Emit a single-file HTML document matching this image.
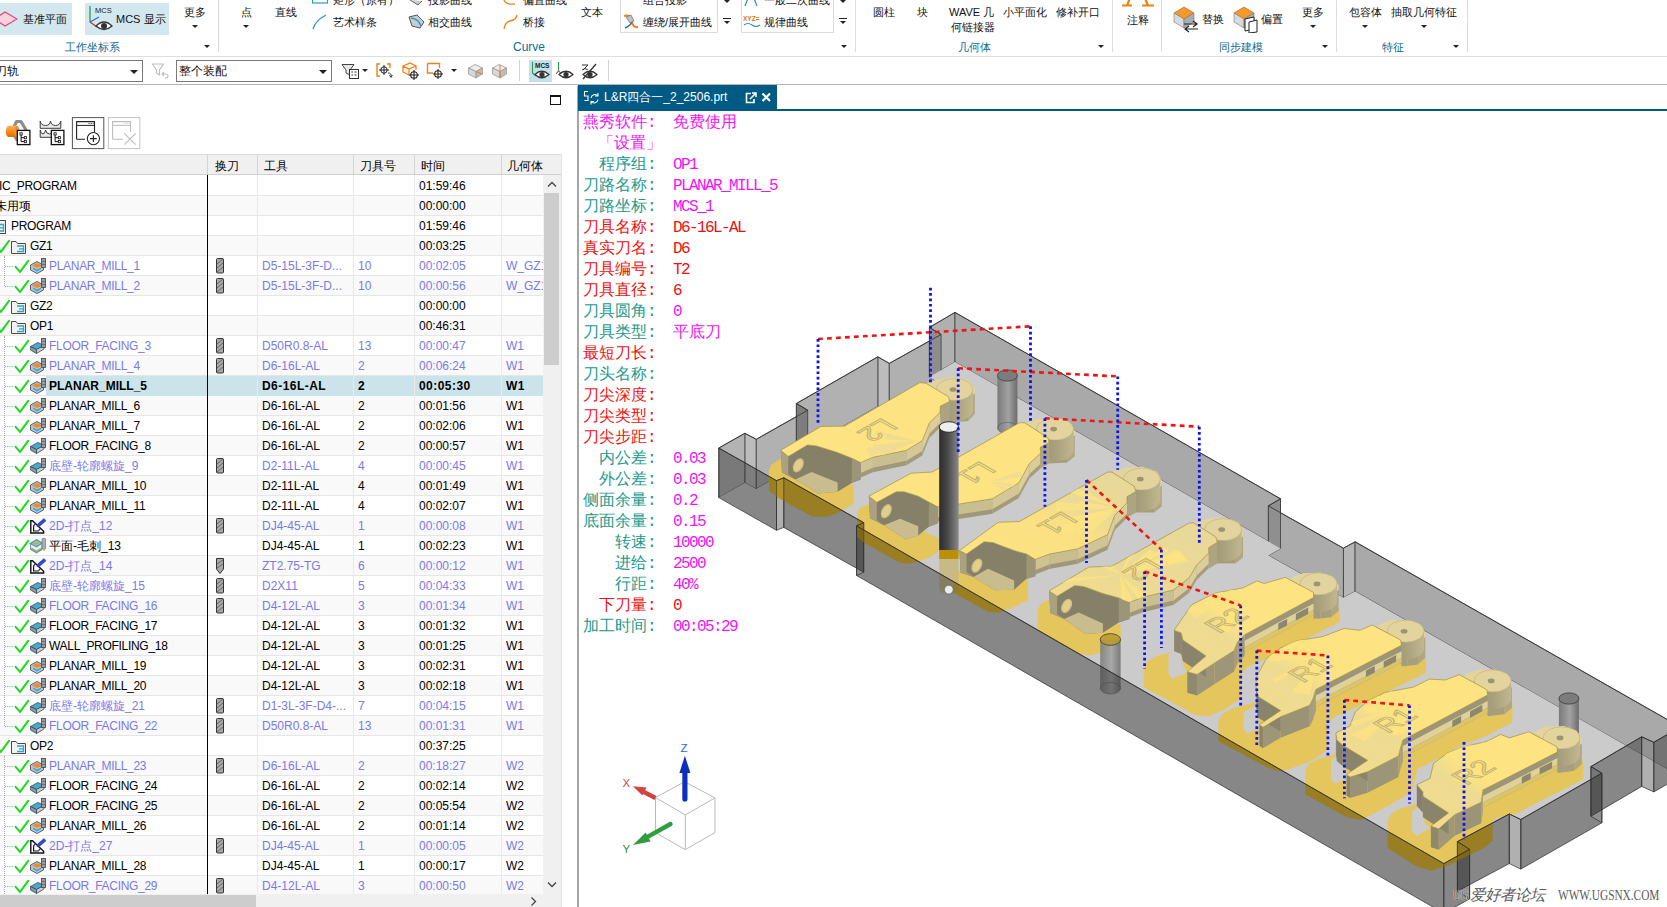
<!DOCTYPE html>
<html lang="zh"><head><meta charset="utf-8"><title>NX</title>
<style>
*{box-sizing:border-box}
html,body{margin:0;padding:0}
body{width:1667px;height:907px;overflow:hidden;background:#fff;position:relative;font-family:"Liberation Sans",sans-serif;font-size:12px;color:#000}
.a{position:absolute;white-space:nowrap}
.t{position:absolute;white-space:nowrap;line-height:14px;height:14px;font-size:11px;color:#111}
.gl{position:absolute;white-space:nowrap;line-height:14px;font-size:11px;color:#0f6a92}
.vs{position:absolute;width:1px;background:#dcdcdc;top:0;height:52px}
.dn{position:absolute;width:0;height:0;border-left:3px solid transparent;border-right:3px solid transparent;border-top:3px solid #222}
.hl{position:absolute;background:#d3e7ee}
.cb{position:absolute;border:1px solid #7a7a7a;background:#fff;height:22px;top:60px}
#left{position:absolute;left:0;top:86px;width:578px;height:821px;background:#fff;overflow:hidden}
.hd{position:absolute;top:154px;height:21px;background:#f0f0f0;border-top:1px solid #dadada;border-bottom:1px solid #d0d0d0;left:0;width:543px}
.hd span{position:absolute;top:4px;line-height:14px;font-size:11.5px}
.hsep{position:absolute;top:155px;width:1px;height:19px;background:#d4d4d4}
.row{position:absolute;left:0;width:543px;height:20px;border-bottom:1px solid #e6e6e6;line-height:20px;font-size:12px}
.row.alt{background:#f9f9f9}
.row span{position:absolute;top:0;white-space:nowrap}
.row .n{letter-spacing:-0.3px}
.row.b{color:#7a7ae6}
.row.sel{font-weight:bold;letter-spacing:.45px}
.row.sel .n{letter-spacing:0}
.csep{position:absolute;top:175px;width:1px;height:719px;background:#e9e9e9}
.info{position:absolute;left:578px;top:0;width:260px}
.info div{position:absolute;height:21px;line-height:21px;font-size:16px;white-space:nowrap}
.info .l{left:0;width:77px;text-align:right}
.info .l i{display:inline-block;width:8px;font-style:normal;text-align:center;font-family:"Liberation Mono",monospace}
.info .v{left:95px;font-family:"Liberation Mono",monospace;letter-spacing:-1.6px}
.info .v.c{font-family:"Liberation Sans",sans-serif;letter-spacing:0}
.m{color:#f314f3}.g{color:#229a8a}.r{color:#ee1111}
</style></head><body>
<div class="a" style="left:0;top:56px;width:1667px;height:1px;background:#dedede"></div>
<div class="a" style="left:0;top:84px;width:1667px;height:1px;background:#b4b4b4"></div>
<div class="hl" style="left:0;top:3px;width:72px;height:32px"></div>
<div class="hl" style="left:85px;top:3px;width:84px;height:32px"></div>
<svg class="a" style="left:0;top:9px" width="18" height="20" viewBox="0 0 18 20"><path d="M-6 10 L5 3 L17 10 L5 17 Z" fill="#fbd3de" stroke="#e0457b" stroke-width="1.2"/></svg>
<span class="t" style="left:23px;top:12px">基准平面</span>
<svg class="a" style="left:87px;top:5px" width="27" height="28" viewBox="0 0 27 28"><text x="8" y="8" font-size="7.5" font-family="Liberation Sans" fill="#222">MCS</text><path d="M3 1 V17" stroke="#2a9a4a" stroke-width="1.3" fill="none"/><path d="M3 17 L10 22" stroke="#d03030" stroke-width="1.3"/><path d="M3 17 L12 12" stroke="#3070d0" stroke-width="1.3"/><path d="M9 21 Q17 13 25 21 Q17 28 9 21 Z" fill="#fff" stroke="#333" stroke-width="1.3"/><circle cx="17" cy="21" r="3" fill="#333"/></svg>
<span class="t" style="left:116px;top:12px">MCS 显示</span>
<span class="t" style="left:184px;top:5px">更多</span><div class="dn" style="left:192px;top:25px"></div>
<span class="gl" style="left:65px;top:40px">工作坐标系</span><div class="dn" style="left:204px;top:45px"></div>
<div class="vs" style="left:218px"></div>
<span class="t" style="left:241px;top:5px">点</span><div class="dn" style="left:243px;top:25px"></div>
<span class="t" style="left:275px;top:5px">直线</span>
<span class="t" style="left:333px;top:-7px">矩形（原有）</span>
<span class="t" style="left:428px;top:-7px">投影曲线</span>
<span class="t" style="left:523px;top:-7px">偏置曲线</span>
<span class="t" style="left:643px;top:-7px">组合投影</span>
<span class="t" style="left:764px;top:-7px">一般二次曲线</span>
<svg class="a" style="left:312px;top:0" width="18" height="4"><rect x="0.5" y="-4" width="15" height="7" fill="none" stroke="#2a9ad0" stroke-width="1.2"/></svg>
<svg class="a" style="left:408px;top:0" width="18" height="6"><path d="M2 0 L10 5 L14 1" fill="#ccc" stroke="#666"/></svg>
<svg class="a" style="left:503px;top:0" width="18" height="6"><path d="M1 0 Q3 5 12 4" fill="none" stroke="#f08020" stroke-width="1.3"/></svg>
<svg class="a" style="left:311px;top:13px" width="18" height="18"><path d="M2 16 Q4 8 15 2" fill="none" stroke="#2a9ad0" stroke-width="1.3"/></svg>
<span class="t" style="left:333px;top:15px">艺术样条</span>
<svg class="a" style="left:407px;top:14px" width="20" height="16"><path d="M2 3 L10 1 L17 8 L13 14 L5 12 Z" fill="#c9ccd0" stroke="#555" stroke-width="1"/><path d="M4 4 Q12 5 14 12" fill="none" stroke="#2a9ad0" stroke-width="1.6"/></svg>
<span class="t" style="left:428px;top:15px">相交曲线</span>
<svg class="a" style="left:502px;top:13px" width="18" height="18"><path d="M2 16 Q3 9 8 8 Q14 7 15 2" fill="none" stroke="#f08020" stroke-width="1.3"/></svg>
<span class="t" style="left:523px;top:15px">桥接</span>
<span class="gl" style="left:513px;top:40px;font-size:12px">Curve</span>
<span class="t" style="left:581px;top:5px">文本</span>
<div class="a" style="left:620px;top:-5px;width:98px;height:38px;border:1px solid #dcdcdc"></div>
<svg class="a" style="left:622px;top:13px" width="18" height="18"><path d="M2 3 Q9 1 10 9 Q11 15 16 14" fill="none" stroke="#f08020" stroke-width="2"/><path d="M3 15 Q8 13 10 9" fill="none" stroke="#2a6ab0" stroke-width="1.4"/><path d="M4 4 L9 2 L12 8 L8 10 Z" fill="#c0c4c8" stroke="#666" stroke-width=".7"/></svg>
<span class="t" style="left:643px;top:15px">缠绕/展开曲线</span>
<div class="dn" style="left:724px;top:0"></div>
<div class="a" style="left:723px;top:18px;width:8px;height:1px;background:#222"></div><div class="dn" style="left:724px;top:21px"></div>
<div class="a" style="left:741px;top:-5px;width:93px;height:38px;border:1px solid #dcdcdc"></div>
<svg class="a" style="left:743px;top:14px" width="18" height="16"><text x="0" y="7" font-size="6.5" font-family="Liberation Sans" fill="#e07818" font-weight="bold">XYZ=</text><path d="M1 11 Q5 8 9 11 T17 11" fill="none" stroke="#2a8ad0" stroke-width="1.2"/></svg>
<svg class="a" style="left:743px;top:0" width="18" height="6"><path d="M2 6 L6 -4 M10 -4 L14 6" fill="none" stroke="#2a8ad0" stroke-width="1.2"/></svg>
<span class="t" style="left:764px;top:15px">规律曲线</span>
<div class="dn" style="left:840px;top:0"></div>
<div class="a" style="left:839px;top:18px;width:8px;height:1px;background:#222"></div><div class="dn" style="left:840px;top:21px"></div>
<div class="dn" style="left:841px;top:45px"></div>
<div class="vs" style="left:855px"></div>
<span class="t" style="left:873px;top:5px">圆柱</span>
<span class="t" style="left:917px;top:5px">块</span>
<span class="t" style="left:949px;top:5px">WAVE 几</span>
<span class="t" style="left:951px;top:20px">何链接器</span>
<span class="t" style="left:1003px;top:5px">小平面化</span>
<span class="t" style="left:1056px;top:5px">修补开口</span>
<span class="gl" style="left:958px;top:40px">几何体</span><div class="dn" style="left:1098px;top:45px"></div>
<div class="vs" style="left:1112px"></div>
<svg class="a" style="left:1120px;top:0" width="36" height="8"><path d="M2 5.5 H12 M22 5.5 H34 M7 5.5 L10 -2 M28 5.5 L24 -4" stroke="#f0801a" stroke-width="2.2" fill="none"/></svg>
<span class="t" style="left:1127px;top:13px">注释</span>
<div class="vs" style="left:1161px"></div>
<svg class="a" style="left:1172px;top:5px" width="28" height="28"><path d="M2 8 L12 2 L22 8 L12 14 Z" fill="#f59a2a" stroke="#b05a00" stroke-width=".6"/><path d="M2 8 V17 L12 23 V14 Z" fill="#d8dadc" stroke="#777" stroke-width=".6"/><path d="M22 8 V17 L12 23 V14 Z" fill="#a9acb0" stroke="#777" stroke-width=".6"/><path d="M12 19 H24 M21 16 L25 19 L21 22 M26 24 H14 M17 21 L13 24 L17 27" fill="none" stroke="#222" stroke-width="1.2"/></svg>
<span class="t" style="left:1202px;top:12px">替换</span>
<svg class="a" style="left:1232px;top:5px" width="28" height="28"><path d="M2 8 L12 2 L22 8 L12 14 Z" fill="#f59a2a" stroke="#b05a00" stroke-width=".6"/><path d="M2 8 V17 L12 23 V14 Z" fill="#d8dadc" stroke="#777" stroke-width=".6"/><path d="M22 8 V17 L12 23 V14 Z" fill="#a9acb0" stroke="#777" stroke-width=".6"/><path d="M13 14 L22 12 V24 L13 26 Z" fill="#fff" stroke="#222" stroke-width="1"/><path d="M17 17 L25 15 V27 L17 28 Z" fill="#fff" stroke="#222" stroke-width="1"/></svg>
<span class="t" style="left:1261px;top:12px">偏置</span>
<span class="t" style="left:1302px;top:5px">更多</span><div class="dn" style="left:1310px;top:25px"></div>
<span class="gl" style="left:1219px;top:40px">同步建模</span><div class="dn" style="left:1322px;top:45px"></div>
<div class="vs" style="left:1336px"></div>
<span class="t" style="left:1349px;top:5px">包容体</span><div class="dn" style="left:1362px;top:25px"></div>
<span class="t" style="left:1391px;top:5px">抽取几何特征</span><div class="dn" style="left:1421px;top:25px"></div>
<span class="gl" style="left:1382px;top:40px">特征</span><div class="dn" style="left:1453px;top:45px"></div>
<div class="vs" style="left:1467px"></div>
<div class="cb" style="left:-2px;width:145px"></div><span class="t" style="left:-5px;top:64px;font-size:12px">刀轨</span>
<div class="dn" style="left:130px;top:70px;border-left-width:4px;border-right-width:4px;border-top-width:4px"></div>
<svg class="a" style="left:151px;top:62px" width="20" height="18"><path d="M1.5 2 H12.5 L8.5 8 V13 L5.5 11 V8 Z" fill="none" stroke="#bdbdbd" stroke-width="1.1"/><path d="M11 12 H15 Q17 12 17 14 Q17 16 14 16 M13 10 L11 12 L13 14" fill="none" stroke="#bdbdbd" stroke-width="1.1"/></svg>
<div class="cb" style="left:176px;width:156px"></div><span class="t" style="left:179px;top:64px;font-size:12px">整个装配</span>
<div class="dn" style="left:319px;top:70px;border-left-width:4px;border-right-width:4px;border-top-width:4px"></div>
<svg class="a" style="left:341px;top:62px" width="20" height="18"><path d="M1 2.5 H13 L9 8 V13 L5 11 V8 Z" fill="#e8e8e8" stroke="#444" stroke-width="1"/><rect x="8.5" y="7.5" width="9" height="9" fill="#fff" stroke="#333"/><path d="M10.5 10 H12 M13.5 10 H15.5 M10.5 13 H12 M13.5 13 H15.5" stroke="#333" stroke-width="1.2"/></svg>
<div class="dn" style="left:362px;top:69px"></div>
<svg class="a" style="left:375px;top:62px" width="20" height="18"><path d="M5 2 H2 V14 H5 M12 2 H15 V6" fill="none" stroke="#f0801a" stroke-width="1.4"/><circle cx="9" cy="8" r="3.2" fill="none" stroke="#222" stroke-width="1"/><path d="M9 3 V13 M4 8 H14" stroke="#222" stroke-width="1"/><path d="M13 11 Q17 11 16 15 M14.5 13 L16 15.5 L17.5 13" fill="none" stroke="#444" stroke-width="1"/></svg>
<svg class="a" style="left:401px;top:61px" width="20" height="20"><path d="M2 5 L9 2 L15 5 L8 8 Z M2 5 V11 L8 14 V8 M15 5 V9" fill="#fff4e6" stroke="#f0801a" stroke-width="1.2"/><circle cx="13" cy="14" r="3.3" fill="none" stroke="#222" stroke-width="1.1"/><path d="M13 9 V19 M8 14 H18" stroke="#222" stroke-width="1.1"/></svg>
<svg class="a" style="left:426px;top:61px" width="20" height="20"><path d="M1.5 2.5 H13.5 V7 M1.5 2.5 V12 H7" fill="none" stroke="#f0801a" stroke-width="1.4"/><circle cx="12" cy="13" r="3.3" fill="none" stroke="#222" stroke-width="1.1"/><path d="M12 8 V18 M7 13 H17" stroke="#222" stroke-width="1.1"/></svg>
<div class="dn" style="left:451px;top:69px"></div>
<svg class="a" style="left:467px;top:62px" width="18" height="18"><path d="M1.5 6 L8 2.5 L15.5 6 L9 9.5 Z" fill="#efefef" stroke="#999" stroke-width=".8"/><path d="M1.5 6 V12 L9 16 V9.5 Z" fill="#d8d8d8" stroke="#999" stroke-width=".8"/><path d="M15.5 6 V12 L9 16 V9.5 Z" fill="#bdbdbd" stroke="#999" stroke-width=".8"/><path d="M9 9.5 L15.5 12" stroke="#f0801a" stroke-width="1.2"/></svg>
<svg class="a" style="left:491px;top:62px" width="18" height="18"><path d="M1.5 6 L8 2.5 L15.5 6 L9 9.5 Z" fill="#efefef" stroke="#999" stroke-width=".8"/><path d="M1.5 6 V12 L9 16 V9.5 Z" fill="#d8d8d8" stroke="#999" stroke-width=".8"/><path d="M15.5 6 V12 L9 16 V9.5 Z" fill="#bdbdbd" stroke="#999" stroke-width=".8"/><path d="M9 3 V16" stroke="#f0801a" stroke-width="1"/></svg>
<div class="a" style="left:519px;top:60px;width:1px;height:21px;background:#d4d4d4"></div>
<div class="hl" style="left:529px;top:60px;width:23px;height:22px;background:#c4e0ea"></div>
<svg class="a" style="left:530px;top:61px" width="22" height="20"><text x="5" y="7" font-size="6.5" font-family="Liberation Sans" fill="#222" font-weight="bold">MCS</text><path d="M2.5 1 V12 L6 15" stroke="#2a9a4a" stroke-width="1.1" fill="none"/><path d="M5 13.5 Q11.5 7 19 13.5 Q11.5 20 5 13.5 Z" fill="#fff" stroke="#333" stroke-width="1.2"/><circle cx="12" cy="13.5" r="2.6" fill="#333"/></svg>
<svg class="a" style="left:556px;top:61px" width="20" height="20"><path d="M2.5 1 V10 L6 13" stroke="#2a9a4a" stroke-width="1.1" fill="none"/><path d="M2.5 10 L0 13" stroke="#d03030" stroke-width="1.1"/><path d="M3 13.5 Q10 7 17 13.5 Q10 20 3 13.5 Z" fill="#fff" stroke="#333" stroke-width="1.2"/><circle cx="10" cy="13.5" r="2.6" fill="#333"/></svg>
<svg class="a" style="left:580px;top:61px" width="20" height="20"><path d="M2 4 H8 L3 9 M2 9 Q5 6 8 9" stroke="#333" stroke-width="1" fill="none"/><path d="M3 13.5 Q10 7 17 13.5 Q10 20 3 13.5 Z" fill="#fff" stroke="#333" stroke-width="1.2"/><circle cx="10" cy="13.5" r="2.6" fill="#333"/><path d="M3 18 L16 3" stroke="#333" stroke-width="1.3"/></svg>
<div class="a" style="left:608px;top:60px;width:1px;height:21px;background:#d4d4d4"></div>
<div class="a" style="left:550px;top:95px;width:11px;height:10px;border:1px solid #111;border-top-width:2px"></div>
<svg class="a" style="left:4px;top:116px" width="140" height="34" viewBox="0 0 140 34"><defs><linearGradient id="og" x1="0" x2="0" y1="0" y2="1"><stop offset="0" stop-color="#ffb457"/><stop offset=".5" stop-color="#f58a1c"/><stop offset="1" stop-color="#e06c00"/></linearGradient></defs><path d="M9.5 12 L12.5 5.5 H17 L22 14 L17 24 L13 24 L10 19" fill="none" stroke="#8d8d8d" stroke-width="3.2" stroke-linejoin="round"/><path d="M4.5 9.8 H13 V21 H4.5 A2.7 5.6 0 0 1 4.5 9.8 Z" fill="url(#og)"/><ellipse cx="13" cy="15.4" rx="2.6" ry="5.6" fill="#f29330"/><rect x="13.3" y="14.4" width="12.6" height="14.2" fill="#fff" stroke="#111" stroke-width="1.3"/><path d="M17.1 18.9 V25.6 H20.5 M17.1 21.7 H20.5" fill="none" stroke="#111" stroke-width="1"/><rect x="16.0" y="16.8" width="2.2" height="2.2" fill="#fff" stroke="#111" stroke-width=".8"/><rect x="20.3" y="20.6" width="2.2" height="2.2" fill="#fff" stroke="#111" stroke-width=".8"/><rect x="20.3" y="24.5" width="2.2" height="2.2" fill="#fff" stroke="#111" stroke-width=".8"/><path d="M36.2 5 V12.3 H56.8 V5 Q56 9.5 51.5 9.5 Q47 9.5 46.5 5 Q46 9.5 41.5 9.5 Q37 9.5 36.2 5 Z" fill="#e9e9e9" stroke="#3c3c3c" stroke-width="1"/><path d="M36.2 14 V21.3 H50 V14 Q49 18 45.5 18 Q42.5 18 41.5 14 Q41 18 39 18 Q36.8 18 36.2 14 Z" fill="#e9e9e9" stroke="#3c3c3c" stroke-width="1"/><rect x="47.3" y="14.4" width="12.6" height="14.2" fill="#fff" stroke="#111" stroke-width="1.3"/><path d="M51.099999999999994 18.9 V25.6 H54.5 M51.099999999999994 21.7 H54.5" fill="none" stroke="#111" stroke-width="1"/><rect x="50.0" y="16.8" width="2.2" height="2.2" fill="#fff" stroke="#111" stroke-width=".8"/><rect x="54.3" y="20.6" width="2.2" height="2.2" fill="#fff" stroke="#111" stroke-width=".8"/><rect x="54.3" y="24.5" width="2.2" height="2.2" fill="#fff" stroke="#111" stroke-width=".8"/><rect x="68.4" y="1.6" width="31.4" height="31" fill="#fff" stroke="#555" stroke-width="1"/><path d="M72.6 23.3 V5.6 H90.5 V16 M72.6 23.3 H81" fill="none" stroke="#222" stroke-width="1.1"/><path d="M72.6 9.4 H90.5" stroke="#222" stroke-width="1"/><path d="M84.6 7.5 H85.6 M86.7 7.5 H87.7 M88.7 7.5 H89.5" stroke="#222" stroke-width="1"/><circle cx="89.4" cy="22.6" r="6.1" fill="#fff" stroke="#222" stroke-width="1.1"/><path d="M86 22.6 H92.8 M89.4 19.2 V26" stroke="#222" stroke-width="1.1"/><rect x="104.4" y="1.6" width="31.4" height="31" fill="#fff" stroke="#c4c4c4" stroke-width="1"/><path d="M108.6 23.3 V5.6 H126.5 V16 M108.6 23.3 H119" fill="none" stroke="#bdbdbd" stroke-width="1.1"/><path d="M108.6 9.4 H126.5" stroke="#bdbdbd" stroke-width="1"/><path d="M120.6 7.5 H121.6 M122.7 7.5 H123.7 M124.7 7.5 H125.5" stroke="#bdbdbd" stroke-width="1"/><path d="M120.3 17.3 L131.7 28.6 M131.7 17.3 L120.3 28.6" stroke="#bdbdbd" stroke-width="1.1"/></svg>
<div class="hd"><span style="left:215px">换刀</span><span style="left:264px">工具</span><span style="left:360px">刀具号</span><span style="left:421px">时间</span><span style="left:507px">几何体</span></div>
<div class="a" style="left:543px;top:154px;width:18px;height:21px;background:#f0f0f0;border-top:1px solid #dadada;border-bottom:1px solid #d0d0d0"></div>
<div class="hsep" style="left:207px"></div>
<div class="hsep" style="left:257px"></div>
<div class="hsep" style="left:353px"></div>
<div class="hsep" style="left:414px"></div>
<div class="hsep" style="left:501px"></div>
<div class="row" style="top:176px"><span class="n" style="left:-1px">IC_PROGRAM</span><span style="left:419px">01:59:46</span></div>
<div class="row alt" style="top:196px"><span class="n" style="left:-5px;letter-spacing:0">未用项</span><span style="left:419px">00:00:00</span></div>
<div class="row" style="top:216px"><svg class="a" style="left:0;top:0" width="48" height="20" viewBox="0 0 48 20"><rect x="-6.5" y="4.5" width="12" height="13" fill="#f2f2f2" stroke="#4a4a4a"/><path d="M-2 8.5 H3.5 V15 H-2 M0 11.8 H3.5" fill="none" stroke="#2aa6cc" stroke-width="1.3"/></svg><span class="n" style="left:11px">PROGRAM</span><span style="left:419px">01:59:46</span></div>
<div class="row alt" style="top:236px"><svg class="a" style="left:0;top:0" width="48" height="20" viewBox="0 0 48 20"><path d="M-3.6 10.8 L0.9000000000000004 15.8 L9 4.8" fill="none" stroke="#20d820" stroke-width="2" stroke-linecap="round"/><path d="M11.5 5.5 H16 L17.5 7.5 H25.5 V17.5 H11.5 Z" fill="#f2f2f2" stroke="#4a4a4a" stroke-width="1"/><path d="M17 10 H23.5 V15.5 H17 M19 12.8 H23.5" fill="none" stroke="#2aa6cc" stroke-width="1.3"/></svg><span class="n" style="left:30px">GZ1</span><span style="left:419px">00:03:25</span></div>
<div class="row b" style="top:256px"><svg class="a" style="left:0;top:0" width="48" height="20" viewBox="0 0 48 20"><path d="M5 10.5 H13" stroke="#9a9a9a" stroke-width="1" stroke-dasharray="1 1.2"/><path d="M15.6 10.8 L20.1 15.8 L28.2 4.8" fill="none" stroke="#20d820" stroke-width="2" stroke-linecap="round"/><path d="M30.5 9 L37 5.5 L43.5 9 V14 L37 17.5 L30.5 14 Z" fill="#b9c4cc" stroke="#4a5560" stroke-width=".9"/><path d="M32 9.5 L37 7 L42 9.5 L37 12 Z" fill="#f08a30"/><path d="M33 11.5 L37 13.5 L41 11.5 L41 13 L37 15.5 L33 13 Z" fill="#39a9d6"/><rect x="41.5" y="2.5" width="4" height="9" fill="#9a9ea4" stroke="#444" stroke-width=".8"/><path d="M41.5 5.5 H45.5 M41.5 8.5 H45.5" stroke="#444" stroke-width=".5"/></svg><span class="n" style="left:49px">PLANAR_MILL_1</span><svg class="a" style="left:216px;top:2px" width="9" height="16"><rect x=".5" y=".5" width="7" height="14.5" rx="1" fill="#a9a9a9" stroke="#333" stroke-width="1"/><path d="M1 6 L7 1 M1 10 L7 5 M1 14 L7 9" stroke="#555" stroke-width=".8"/></svg><span style="left:262px">D5-15L-3F-D...</span><span style="left:358px">10</span><span style="left:419px">00:02:05</span><span style="left:506px;width:37px;overflow:hidden">W_GZ1</span></div>
<div class="row alt b" style="top:276px"><svg class="a" style="left:0;top:0" width="48" height="20" viewBox="0 0 48 20"><path d="M5 10.5 H13" stroke="#9a9a9a" stroke-width="1" stroke-dasharray="1 1.2"/><path d="M15.6 10.8 L20.1 15.8 L28.2 4.8" fill="none" stroke="#20d820" stroke-width="2" stroke-linecap="round"/><path d="M30.5 9 L37 5.5 L43.5 9 V14 L37 17.5 L30.5 14 Z" fill="#b9c4cc" stroke="#4a5560" stroke-width=".9"/><path d="M32 9.5 L37 7 L42 9.5 L37 12 Z" fill="#f08a30"/><path d="M33 11.5 L37 13.5 L41 11.5 L41 13 L37 15.5 L33 13 Z" fill="#39a9d6"/><rect x="41.5" y="2.5" width="4" height="9" fill="#9a9ea4" stroke="#444" stroke-width=".8"/><path d="M41.5 5.5 H45.5 M41.5 8.5 H45.5" stroke="#444" stroke-width=".5"/></svg><span class="n" style="left:49px">PLANAR_MILL_2</span><svg class="a" style="left:216px;top:2px" width="9" height="16"><rect x=".5" y=".5" width="7" height="14.5" rx="1" fill="#a9a9a9" stroke="#333" stroke-width="1"/><path d="M1 6 L7 1 M1 10 L7 5 M1 14 L7 9" stroke="#555" stroke-width=".8"/></svg><span style="left:262px">D5-15L-3F-D...</span><span style="left:358px">10</span><span style="left:419px">00:00:56</span><span style="left:506px;width:37px;overflow:hidden">W_GZ1</span></div>
<div class="row" style="top:296px"><svg class="a" style="left:0;top:0" width="48" height="20" viewBox="0 0 48 20"><path d="M-3.6 10.8 L0.9000000000000004 15.8 L9 4.8" fill="none" stroke="#20d820" stroke-width="2" stroke-linecap="round"/><path d="M11.5 5.5 H16 L17.5 7.5 H25.5 V17.5 H11.5 Z" fill="#f2f2f2" stroke="#4a4a4a" stroke-width="1"/><path d="M17 10 H23.5 V15.5 H17 M19 12.8 H23.5" fill="none" stroke="#2aa6cc" stroke-width="1.3"/></svg><span class="n" style="left:30px">GZ2</span><span style="left:419px">00:00:00</span></div>
<div class="row alt" style="top:316px"><svg class="a" style="left:0;top:0" width="48" height="20" viewBox="0 0 48 20"><path d="M-3.6 10.8 L0.9000000000000004 15.8 L9 4.8" fill="none" stroke="#20d820" stroke-width="2" stroke-linecap="round"/><path d="M11.5 5.5 H16 L17.5 7.5 H25.5 V17.5 H11.5 Z" fill="#f2f2f2" stroke="#4a4a4a" stroke-width="1"/><path d="M17 10 H23.5 V15.5 H17 M19 12.8 H23.5" fill="none" stroke="#2aa6cc" stroke-width="1.3"/></svg><span class="n" style="left:30px">OP1</span><span style="left:419px">00:46:31</span></div>
<div class="row b" style="top:336px"><svg class="a" style="left:0;top:0" width="48" height="20" viewBox="0 0 48 20"><path d="M5 10.5 H13" stroke="#9a9a9a" stroke-width="1" stroke-dasharray="1 1.2"/><path d="M15.6 10.8 L20.1 15.8 L28.2 4.8" fill="none" stroke="#20d820" stroke-width="2" stroke-linecap="round"/><path d="M30.5 10.5 L38 6.5 L44 9.5 L36.5 13.5 Z" fill="#4aa8cf" stroke="#3a4a55" stroke-width=".8"/><path d="M30.5 10.5 V14 L36.5 17.5 V13.5 Z" fill="#8c969e" stroke="#3a4a55" stroke-width=".8"/><path d="M44 9.5 V13 L36.5 17.5 V13.5 Z" fill="#c9ced3" stroke="#3a4a55" stroke-width=".8"/><rect x="41.5" y="2.5" width="4" height="9" fill="#9a9ea4" stroke="#444" stroke-width=".8"/><path d="M41.5 5.5 H45.5 M41.5 8.5 H45.5" stroke="#444" stroke-width=".5"/></svg><span class="n" style="left:49px">FLOOR_FACING_3</span><svg class="a" style="left:216px;top:2px" width="9" height="16"><rect x=".5" y=".5" width="7" height="14.5" rx="1" fill="#a9a9a9" stroke="#333" stroke-width="1"/><path d="M1 6 L7 1 M1 10 L7 5 M1 14 L7 9" stroke="#555" stroke-width=".8"/></svg><span style="left:262px">D50R0.8-AL</span><span style="left:358px">13</span><span style="left:419px">00:00:47</span><span style="left:506px;width:37px;overflow:hidden">W1</span></div>
<div class="row alt b" style="top:356px"><svg class="a" style="left:0;top:0" width="48" height="20" viewBox="0 0 48 20"><path d="M5 10.5 H13" stroke="#9a9a9a" stroke-width="1" stroke-dasharray="1 1.2"/><path d="M15.6 10.8 L20.1 15.8 L28.2 4.8" fill="none" stroke="#20d820" stroke-width="2" stroke-linecap="round"/><path d="M30.5 9 L37 5.5 L43.5 9 V14 L37 17.5 L30.5 14 Z" fill="#b9c4cc" stroke="#4a5560" stroke-width=".9"/><path d="M32 9.5 L37 7 L42 9.5 L37 12 Z" fill="#f08a30"/><path d="M33 11.5 L37 13.5 L41 11.5 L41 13 L37 15.5 L33 13 Z" fill="#39a9d6"/><rect x="41.5" y="2.5" width="4" height="9" fill="#9a9ea4" stroke="#444" stroke-width=".8"/><path d="M41.5 5.5 H45.5 M41.5 8.5 H45.5" stroke="#444" stroke-width=".5"/></svg><span class="n" style="left:49px">PLANAR_MILL_4</span><svg class="a" style="left:216px;top:2px" width="9" height="16"><rect x=".5" y=".5" width="7" height="14.5" rx="1" fill="#a9a9a9" stroke="#333" stroke-width="1"/><path d="M1 6 L7 1 M1 10 L7 5 M1 14 L7 9" stroke="#555" stroke-width=".8"/></svg><span style="left:262px">D6-16L-AL</span><span style="left:358px">2</span><span style="left:419px">00:06:24</span><span style="left:506px;width:37px;overflow:hidden">W1</span></div>
<div class="row sel" style="top:376px"><div class="a" style="left:46px;top:0;width:497px;height:20px;background:#cbe4eb"></div><svg class="a" style="left:0;top:0" width="48" height="20" viewBox="0 0 48 20"><path d="M5 10.5 H13" stroke="#9a9a9a" stroke-width="1" stroke-dasharray="1 1.2"/><path d="M15.6 10.8 L20.1 15.8 L28.2 4.8" fill="none" stroke="#20d820" stroke-width="2" stroke-linecap="round"/><path d="M30.5 9 L37 5.5 L43.5 9 V14 L37 17.5 L30.5 14 Z" fill="#b9c4cc" stroke="#4a5560" stroke-width=".9"/><path d="M32 9.5 L37 7 L42 9.5 L37 12 Z" fill="#f08a30"/><path d="M33 11.5 L37 13.5 L41 11.5 L41 13 L37 15.5 L33 13 Z" fill="#39a9d6"/><rect x="41.5" y="2.5" width="4" height="9" fill="#9a9ea4" stroke="#444" stroke-width=".8"/><path d="M41.5 5.5 H45.5 M41.5 8.5 H45.5" stroke="#444" stroke-width=".5"/></svg><span class="n" style="left:49px">PLANAR_MILL_5</span><span style="left:262px">D6-16L-AL</span><span style="left:358px">2</span><span style="left:419px">00:05:30</span><span style="left:506px;width:37px;overflow:hidden">W1</span></div>
<div class="row alt" style="top:396px"><svg class="a" style="left:0;top:0" width="48" height="20" viewBox="0 0 48 20"><path d="M5 10.5 H13" stroke="#9a9a9a" stroke-width="1" stroke-dasharray="1 1.2"/><path d="M15.6 10.8 L20.1 15.8 L28.2 4.8" fill="none" stroke="#20d820" stroke-width="2" stroke-linecap="round"/><path d="M30.5 9 L37 5.5 L43.5 9 V14 L37 17.5 L30.5 14 Z" fill="#b9c4cc" stroke="#4a5560" stroke-width=".9"/><path d="M32 9.5 L37 7 L42 9.5 L37 12 Z" fill="#f08a30"/><path d="M33 11.5 L37 13.5 L41 11.5 L41 13 L37 15.5 L33 13 Z" fill="#39a9d6"/><rect x="41.5" y="2.5" width="4" height="9" fill="#9a9ea4" stroke="#444" stroke-width=".8"/><path d="M41.5 5.5 H45.5 M41.5 8.5 H45.5" stroke="#444" stroke-width=".5"/></svg><span class="n" style="left:49px">PLANAR_MILL_6</span><span style="left:262px">D6-16L-AL</span><span style="left:358px">2</span><span style="left:419px">00:01:56</span><span style="left:506px;width:37px;overflow:hidden">W1</span></div>
<div class="row" style="top:416px"><svg class="a" style="left:0;top:0" width="48" height="20" viewBox="0 0 48 20"><path d="M5 10.5 H13" stroke="#9a9a9a" stroke-width="1" stroke-dasharray="1 1.2"/><path d="M15.6 10.8 L20.1 15.8 L28.2 4.8" fill="none" stroke="#20d820" stroke-width="2" stroke-linecap="round"/><path d="M30.5 9 L37 5.5 L43.5 9 V14 L37 17.5 L30.5 14 Z" fill="#b9c4cc" stroke="#4a5560" stroke-width=".9"/><path d="M32 9.5 L37 7 L42 9.5 L37 12 Z" fill="#f08a30"/><path d="M33 11.5 L37 13.5 L41 11.5 L41 13 L37 15.5 L33 13 Z" fill="#39a9d6"/><rect x="41.5" y="2.5" width="4" height="9" fill="#9a9ea4" stroke="#444" stroke-width=".8"/><path d="M41.5 5.5 H45.5 M41.5 8.5 H45.5" stroke="#444" stroke-width=".5"/></svg><span class="n" style="left:49px">PLANAR_MILL_7</span><span style="left:262px">D6-16L-AL</span><span style="left:358px">2</span><span style="left:419px">00:02:06</span><span style="left:506px;width:37px;overflow:hidden">W1</span></div>
<div class="row alt" style="top:436px"><svg class="a" style="left:0;top:0" width="48" height="20" viewBox="0 0 48 20"><path d="M5 10.5 H13" stroke="#9a9a9a" stroke-width="1" stroke-dasharray="1 1.2"/><path d="M15.6 10.8 L20.1 15.8 L28.2 4.8" fill="none" stroke="#20d820" stroke-width="2" stroke-linecap="round"/><path d="M30.5 10.5 L38 6.5 L44 9.5 L36.5 13.5 Z" fill="#4aa8cf" stroke="#3a4a55" stroke-width=".8"/><path d="M30.5 10.5 V14 L36.5 17.5 V13.5 Z" fill="#8c969e" stroke="#3a4a55" stroke-width=".8"/><path d="M44 9.5 V13 L36.5 17.5 V13.5 Z" fill="#c9ced3" stroke="#3a4a55" stroke-width=".8"/><rect x="41.5" y="2.5" width="4" height="9" fill="#9a9ea4" stroke="#444" stroke-width=".8"/><path d="M41.5 5.5 H45.5 M41.5 8.5 H45.5" stroke="#444" stroke-width=".5"/></svg><span class="n" style="left:49px">FLOOR_FACING_8</span><span style="left:262px">D6-16L-AL</span><span style="left:358px">2</span><span style="left:419px">00:00:57</span><span style="left:506px;width:37px;overflow:hidden">W1</span></div>
<div class="row b" style="top:456px"><svg class="a" style="left:0;top:0" width="48" height="20" viewBox="0 0 48 20"><path d="M5 10.5 H13" stroke="#9a9a9a" stroke-width="1" stroke-dasharray="1 1.2"/><path d="M15.6 10.8 L20.1 15.8 L28.2 4.8" fill="none" stroke="#20d820" stroke-width="2" stroke-linecap="round"/><path d="M30.5 10.5 L38 6.5 L44 9.5 L36.5 13.5 Z" fill="#4aa8cf" stroke="#3a4a55" stroke-width=".8"/><path d="M30.5 10.5 V14 L36.5 17.5 V13.5 Z" fill="#8c969e" stroke="#3a4a55" stroke-width=".8"/><path d="M44 9.5 V13 L36.5 17.5 V13.5 Z" fill="#c9ced3" stroke="#3a4a55" stroke-width=".8"/><rect x="41.5" y="2.5" width="4" height="9" fill="#9a9ea4" stroke="#444" stroke-width=".8"/><path d="M41.5 5.5 H45.5 M41.5 8.5 H45.5" stroke="#444" stroke-width=".5"/></svg><span class="n" style="left:49px;letter-spacing:0">底壁-轮廓螺旋_9</span><svg class="a" style="left:216px;top:2px" width="9" height="16"><rect x=".5" y=".5" width="7" height="14.5" rx="1" fill="#a9a9a9" stroke="#333" stroke-width="1"/><path d="M1 6 L7 1 M1 10 L7 5 M1 14 L7 9" stroke="#555" stroke-width=".8"/></svg><span style="left:262px">D2-11L-AL</span><span style="left:358px">4</span><span style="left:419px">00:00:45</span><span style="left:506px;width:37px;overflow:hidden">W1</span></div>
<div class="row alt" style="top:476px"><svg class="a" style="left:0;top:0" width="48" height="20" viewBox="0 0 48 20"><path d="M5 10.5 H13" stroke="#9a9a9a" stroke-width="1" stroke-dasharray="1 1.2"/><path d="M15.6 10.8 L20.1 15.8 L28.2 4.8" fill="none" stroke="#20d820" stroke-width="2" stroke-linecap="round"/><path d="M30.5 9 L37 5.5 L43.5 9 V14 L37 17.5 L30.5 14 Z" fill="#b9c4cc" stroke="#4a5560" stroke-width=".9"/><path d="M32 9.5 L37 7 L42 9.5 L37 12 Z" fill="#f08a30"/><path d="M33 11.5 L37 13.5 L41 11.5 L41 13 L37 15.5 L33 13 Z" fill="#39a9d6"/><rect x="41.5" y="2.5" width="4" height="9" fill="#9a9ea4" stroke="#444" stroke-width=".8"/><path d="M41.5 5.5 H45.5 M41.5 8.5 H45.5" stroke="#444" stroke-width=".5"/></svg><span class="n" style="left:49px">PLANAR_MILL_10</span><span style="left:262px">D2-11L-AL</span><span style="left:358px">4</span><span style="left:419px">00:01:49</span><span style="left:506px;width:37px;overflow:hidden">W1</span></div>
<div class="row" style="top:496px"><svg class="a" style="left:0;top:0" width="48" height="20" viewBox="0 0 48 20"><path d="M5 10.5 H13" stroke="#9a9a9a" stroke-width="1" stroke-dasharray="1 1.2"/><path d="M15.6 10.8 L20.1 15.8 L28.2 4.8" fill="none" stroke="#20d820" stroke-width="2" stroke-linecap="round"/><path d="M30.5 9 L37 5.5 L43.5 9 V14 L37 17.5 L30.5 14 Z" fill="#b9c4cc" stroke="#4a5560" stroke-width=".9"/><path d="M32 9.5 L37 7 L42 9.5 L37 12 Z" fill="#f08a30"/><path d="M33 11.5 L37 13.5 L41 11.5 L41 13 L37 15.5 L33 13 Z" fill="#39a9d6"/><rect x="41.5" y="2.5" width="4" height="9" fill="#9a9ea4" stroke="#444" stroke-width=".8"/><path d="M41.5 5.5 H45.5 M41.5 8.5 H45.5" stroke="#444" stroke-width=".5"/></svg><span class="n" style="left:49px">PLANAR_MILL_11</span><span style="left:262px">D2-11L-AL</span><span style="left:358px">4</span><span style="left:419px">00:02:07</span><span style="left:506px;width:37px;overflow:hidden">W1</span></div>
<div class="row alt b" style="top:516px"><svg class="a" style="left:0;top:0" width="48" height="20" viewBox="0 0 48 20"><path d="M5 10.5 H13" stroke="#9a9a9a" stroke-width="1" stroke-dasharray="1 1.2"/><path d="M15.6 10.8 L20.1 15.8 L28.2 4.8" fill="none" stroke="#20d820" stroke-width="2" stroke-linecap="round"/><path d="M30.8 4.8 H32.5 L43.6 15.2 V17 H30.8 Z" fill="#fff" stroke="#111" stroke-width="1.4" stroke-linejoin="miter"/><path d="M33.6 9.5 V15 H38.6" fill="none" stroke="#111" stroke-width="1.2"/><path d="M33.6 10.5 Q34 8.5 35.6 8.2 M38.4 14.8 Q39.5 14 40 12.8" fill="none" stroke="#1a22d0" stroke-width="1.2"/><path d="M37 10.7 L38 7.6 L44 2.6 L46 4.8 L40 10 Z" fill="#3946c8" stroke="#2530a8" stroke-width=".5"/></svg><span class="n" style="left:49px;letter-spacing:0">2D-打点_12</span><svg class="a" style="left:216px;top:2px" width="9" height="16"><rect x=".5" y=".5" width="7" height="14.5" rx="1" fill="#a9a9a9" stroke="#333" stroke-width="1"/><path d="M1 6 L7 1 M1 10 L7 5 M1 14 L7 9" stroke="#555" stroke-width=".8"/></svg><span style="left:262px">DJ4-45-AL</span><span style="left:358px">1</span><span style="left:419px">00:00:08</span><span style="left:506px;width:37px;overflow:hidden">W1</span></div>
<div class="row" style="top:536px"><svg class="a" style="left:0;top:0" width="48" height="20" viewBox="0 0 48 20"><path d="M5 10.5 H13" stroke="#9a9a9a" stroke-width="1" stroke-dasharray="1 1.2"/><path d="M15.6 10.8 L20.1 15.8 L28.2 4.8" fill="none" stroke="#20d820" stroke-width="2" stroke-linecap="round"/><path d="M30.5 7.5 L36.5 4 L42 7 V13.5 L36.5 17 L30.5 13.5 Z" fill="#eef1f3" stroke="#6a747c" stroke-width=".8"/><path d="M30.5 7.5 L36.5 4 L42 7 L36.5 10.5 Z" fill="none" stroke="#2fb0d8" stroke-width="1.6"/><path d="M32 7.5 L36.5 5.2 L40.5 7 L36.5 9.2 Z" fill="#f49a3c"/><path d="M31 13 L36.5 16.2 L42 13" fill="none" stroke="#2fb0d8" stroke-width="1.5"/><path d="M31.5 12 L36.5 15 L41.5 12" fill="none" stroke="#f49a3c" stroke-width="1.2"/><rect x="42" y="2.3" width="3.6" height="11" rx="1.2" fill="#a9adb2" stroke="#60666c" stroke-width=".6"/><circle cx="43.8" cy="14" r="1" fill="#e0b020"/></svg><span class="n" style="left:49px;letter-spacing:0">平面-毛刺_13</span><span style="left:262px">DJ4-45-AL</span><span style="left:358px">1</span><span style="left:419px">00:02:23</span><span style="left:506px;width:37px;overflow:hidden">W1</span></div>
<div class="row alt b" style="top:556px"><svg class="a" style="left:0;top:0" width="48" height="20" viewBox="0 0 48 20"><path d="M5 10.5 H13" stroke="#9a9a9a" stroke-width="1" stroke-dasharray="1 1.2"/><path d="M15.6 10.8 L20.1 15.8 L28.2 4.8" fill="none" stroke="#20d820" stroke-width="2" stroke-linecap="round"/><path d="M30.8 4.8 H32.5 L43.6 15.2 V17 H30.8 Z" fill="#fff" stroke="#111" stroke-width="1.4" stroke-linejoin="miter"/><path d="M33.6 9.5 V15 H38.6" fill="none" stroke="#111" stroke-width="1.2"/><path d="M33.6 10.5 Q34 8.5 35.6 8.2 M38.4 14.8 Q39.5 14 40 12.8" fill="none" stroke="#1a22d0" stroke-width="1.2"/><path d="M37 10.7 L38 7.6 L44 2.6 L46 4.8 L40 10 Z" fill="#3946c8" stroke="#2530a8" stroke-width=".5"/></svg><span class="n" style="left:49px;letter-spacing:0">2D-打点_14</span><svg class="a" style="left:216px;top:2px" width="9" height="16"><path d="M.5 .5 H7.5 V11 L4 15.5 L.5 11 Z" fill="#a9a9a9" stroke="#333" stroke-width="1"/><path d="M1 6 L7 2 M1 10 L7 6" stroke="#555" stroke-width=".8"/></svg><span style="left:262px">ZT2.75-TG</span><span style="left:358px">6</span><span style="left:419px">00:00:12</span><span style="left:506px;width:37px;overflow:hidden">W1</span></div>
<div class="row b" style="top:576px"><svg class="a" style="left:0;top:0" width="48" height="20" viewBox="0 0 48 20"><path d="M5 10.5 H13" stroke="#9a9a9a" stroke-width="1" stroke-dasharray="1 1.2"/><path d="M15.6 10.8 L20.1 15.8 L28.2 4.8" fill="none" stroke="#20d820" stroke-width="2" stroke-linecap="round"/><path d="M30.5 10.5 L38 6.5 L44 9.5 L36.5 13.5 Z" fill="#4aa8cf" stroke="#3a4a55" stroke-width=".8"/><path d="M30.5 10.5 V14 L36.5 17.5 V13.5 Z" fill="#8c969e" stroke="#3a4a55" stroke-width=".8"/><path d="M44 9.5 V13 L36.5 17.5 V13.5 Z" fill="#c9ced3" stroke="#3a4a55" stroke-width=".8"/><rect x="41.5" y="2.5" width="4" height="9" fill="#9a9ea4" stroke="#444" stroke-width=".8"/><path d="M41.5 5.5 H45.5 M41.5 8.5 H45.5" stroke="#444" stroke-width=".5"/></svg><span class="n" style="left:49px;letter-spacing:0">底壁-轮廓螺旋_15</span><svg class="a" style="left:216px;top:2px" width="9" height="16"><rect x=".5" y=".5" width="7" height="14.5" rx="1" fill="#a9a9a9" stroke="#333" stroke-width="1"/><path d="M1 6 L7 1 M1 10 L7 5 M1 14 L7 9" stroke="#555" stroke-width=".8"/></svg><span style="left:262px">D2X11</span><span style="left:358px">5</span><span style="left:419px">00:04:33</span><span style="left:506px;width:37px;overflow:hidden">W1</span></div>
<div class="row alt b" style="top:596px"><svg class="a" style="left:0;top:0" width="48" height="20" viewBox="0 0 48 20"><path d="M5 10.5 H13" stroke="#9a9a9a" stroke-width="1" stroke-dasharray="1 1.2"/><path d="M15.6 10.8 L20.1 15.8 L28.2 4.8" fill="none" stroke="#20d820" stroke-width="2" stroke-linecap="round"/><path d="M30.5 10.5 L38 6.5 L44 9.5 L36.5 13.5 Z" fill="#4aa8cf" stroke="#3a4a55" stroke-width=".8"/><path d="M30.5 10.5 V14 L36.5 17.5 V13.5 Z" fill="#8c969e" stroke="#3a4a55" stroke-width=".8"/><path d="M44 9.5 V13 L36.5 17.5 V13.5 Z" fill="#c9ced3" stroke="#3a4a55" stroke-width=".8"/><rect x="41.5" y="2.5" width="4" height="9" fill="#9a9ea4" stroke="#444" stroke-width=".8"/><path d="M41.5 5.5 H45.5 M41.5 8.5 H45.5" stroke="#444" stroke-width=".5"/></svg><span class="n" style="left:49px">FLOOR_FACING_16</span><svg class="a" style="left:216px;top:2px" width="9" height="16"><rect x=".5" y=".5" width="7" height="14.5" rx="1" fill="#a9a9a9" stroke="#333" stroke-width="1"/><path d="M1 6 L7 1 M1 10 L7 5 M1 14 L7 9" stroke="#555" stroke-width=".8"/></svg><span style="left:262px">D4-12L-AL</span><span style="left:358px">3</span><span style="left:419px">00:01:34</span><span style="left:506px;width:37px;overflow:hidden">W1</span></div>
<div class="row" style="top:616px"><svg class="a" style="left:0;top:0" width="48" height="20" viewBox="0 0 48 20"><path d="M5 10.5 H13" stroke="#9a9a9a" stroke-width="1" stroke-dasharray="1 1.2"/><path d="M15.6 10.8 L20.1 15.8 L28.2 4.8" fill="none" stroke="#20d820" stroke-width="2" stroke-linecap="round"/><path d="M30.5 10.5 L38 6.5 L44 9.5 L36.5 13.5 Z" fill="#4aa8cf" stroke="#3a4a55" stroke-width=".8"/><path d="M30.5 10.5 V14 L36.5 17.5 V13.5 Z" fill="#8c969e" stroke="#3a4a55" stroke-width=".8"/><path d="M44 9.5 V13 L36.5 17.5 V13.5 Z" fill="#c9ced3" stroke="#3a4a55" stroke-width=".8"/><rect x="41.5" y="2.5" width="4" height="9" fill="#9a9ea4" stroke="#444" stroke-width=".8"/><path d="M41.5 5.5 H45.5 M41.5 8.5 H45.5" stroke="#444" stroke-width=".5"/></svg><span class="n" style="left:49px">FLOOR_FACING_17</span><span style="left:262px">D4-12L-AL</span><span style="left:358px">3</span><span style="left:419px">00:01:32</span><span style="left:506px;width:37px;overflow:hidden">W1</span></div>
<div class="row alt" style="top:636px"><svg class="a" style="left:0;top:0" width="48" height="20" viewBox="0 0 48 20"><path d="M5 10.5 H13" stroke="#9a9a9a" stroke-width="1" stroke-dasharray="1 1.2"/><path d="M15.6 10.8 L20.1 15.8 L28.2 4.8" fill="none" stroke="#20d820" stroke-width="2" stroke-linecap="round"/><path d="M30.5 10.5 L38 6.5 L44 9.5 L36.5 13.5 Z" fill="#4aa8cf" stroke="#3a4a55" stroke-width=".8"/><path d="M30.5 10.5 V14 L36.5 17.5 V13.5 Z" fill="#8c969e" stroke="#3a4a55" stroke-width=".8"/><path d="M44 9.5 V13 L36.5 17.5 V13.5 Z" fill="#c9ced3" stroke="#3a4a55" stroke-width=".8"/><rect x="41.5" y="2.5" width="4" height="9" fill="#9a9ea4" stroke="#444" stroke-width=".8"/><path d="M41.5 5.5 H45.5 M41.5 8.5 H45.5" stroke="#444" stroke-width=".5"/></svg><span class="n" style="left:49px">WALL_PROFILING_18</span><span style="left:262px">D4-12L-AL</span><span style="left:358px">3</span><span style="left:419px">00:01:25</span><span style="left:506px;width:37px;overflow:hidden">W1</span></div>
<div class="row" style="top:656px"><svg class="a" style="left:0;top:0" width="48" height="20" viewBox="0 0 48 20"><path d="M5 10.5 H13" stroke="#9a9a9a" stroke-width="1" stroke-dasharray="1 1.2"/><path d="M15.6 10.8 L20.1 15.8 L28.2 4.8" fill="none" stroke="#20d820" stroke-width="2" stroke-linecap="round"/><path d="M30.5 9 L37 5.5 L43.5 9 V14 L37 17.5 L30.5 14 Z" fill="#b9c4cc" stroke="#4a5560" stroke-width=".9"/><path d="M32 9.5 L37 7 L42 9.5 L37 12 Z" fill="#f08a30"/><path d="M33 11.5 L37 13.5 L41 11.5 L41 13 L37 15.5 L33 13 Z" fill="#39a9d6"/><rect x="41.5" y="2.5" width="4" height="9" fill="#9a9ea4" stroke="#444" stroke-width=".8"/><path d="M41.5 5.5 H45.5 M41.5 8.5 H45.5" stroke="#444" stroke-width=".5"/></svg><span class="n" style="left:49px">PLANAR_MILL_19</span><span style="left:262px">D4-12L-AL</span><span style="left:358px">3</span><span style="left:419px">00:02:31</span><span style="left:506px;width:37px;overflow:hidden">W1</span></div>
<div class="row alt" style="top:676px"><svg class="a" style="left:0;top:0" width="48" height="20" viewBox="0 0 48 20"><path d="M5 10.5 H13" stroke="#9a9a9a" stroke-width="1" stroke-dasharray="1 1.2"/><path d="M15.6 10.8 L20.1 15.8 L28.2 4.8" fill="none" stroke="#20d820" stroke-width="2" stroke-linecap="round"/><path d="M30.5 9 L37 5.5 L43.5 9 V14 L37 17.5 L30.5 14 Z" fill="#b9c4cc" stroke="#4a5560" stroke-width=".9"/><path d="M32 9.5 L37 7 L42 9.5 L37 12 Z" fill="#f08a30"/><path d="M33 11.5 L37 13.5 L41 11.5 L41 13 L37 15.5 L33 13 Z" fill="#39a9d6"/><rect x="41.5" y="2.5" width="4" height="9" fill="#9a9ea4" stroke="#444" stroke-width=".8"/><path d="M41.5 5.5 H45.5 M41.5 8.5 H45.5" stroke="#444" stroke-width=".5"/></svg><span class="n" style="left:49px">PLANAR_MILL_20</span><span style="left:262px">D4-12L-AL</span><span style="left:358px">3</span><span style="left:419px">00:02:18</span><span style="left:506px;width:37px;overflow:hidden">W1</span></div>
<div class="row b" style="top:696px"><svg class="a" style="left:0;top:0" width="48" height="20" viewBox="0 0 48 20"><path d="M5 10.5 H13" stroke="#9a9a9a" stroke-width="1" stroke-dasharray="1 1.2"/><path d="M15.6 10.8 L20.1 15.8 L28.2 4.8" fill="none" stroke="#20d820" stroke-width="2" stroke-linecap="round"/><path d="M30.5 10.5 L38 6.5 L44 9.5 L36.5 13.5 Z" fill="#4aa8cf" stroke="#3a4a55" stroke-width=".8"/><path d="M30.5 10.5 V14 L36.5 17.5 V13.5 Z" fill="#8c969e" stroke="#3a4a55" stroke-width=".8"/><path d="M44 9.5 V13 L36.5 17.5 V13.5 Z" fill="#c9ced3" stroke="#3a4a55" stroke-width=".8"/><rect x="41.5" y="2.5" width="4" height="9" fill="#9a9ea4" stroke="#444" stroke-width=".8"/><path d="M41.5 5.5 H45.5 M41.5 8.5 H45.5" stroke="#444" stroke-width=".5"/></svg><span class="n" style="left:49px;letter-spacing:0">底壁-轮廓螺旋_21</span><svg class="a" style="left:216px;top:2px" width="9" height="16"><rect x=".5" y=".5" width="7" height="14.5" rx="1" fill="#a9a9a9" stroke="#333" stroke-width="1"/><path d="M1 6 L7 1 M1 10 L7 5 M1 14 L7 9" stroke="#555" stroke-width=".8"/></svg><span style="left:262px">D1-3L-3F-D4-...</span><span style="left:358px">7</span><span style="left:419px">00:04:15</span><span style="left:506px;width:37px;overflow:hidden">W1</span></div>
<div class="row alt b" style="top:716px"><svg class="a" style="left:0;top:0" width="48" height="20" viewBox="0 0 48 20"><path d="M5 10.5 H13" stroke="#9a9a9a" stroke-width="1" stroke-dasharray="1 1.2"/><path d="M15.6 10.8 L20.1 15.8 L28.2 4.8" fill="none" stroke="#20d820" stroke-width="2" stroke-linecap="round"/><path d="M30.5 10.5 L38 6.5 L44 9.5 L36.5 13.5 Z" fill="#4aa8cf" stroke="#3a4a55" stroke-width=".8"/><path d="M30.5 10.5 V14 L36.5 17.5 V13.5 Z" fill="#8c969e" stroke="#3a4a55" stroke-width=".8"/><path d="M44 9.5 V13 L36.5 17.5 V13.5 Z" fill="#c9ced3" stroke="#3a4a55" stroke-width=".8"/><rect x="41.5" y="2.5" width="4" height="9" fill="#9a9ea4" stroke="#444" stroke-width=".8"/><path d="M41.5 5.5 H45.5 M41.5 8.5 H45.5" stroke="#444" stroke-width=".5"/></svg><span class="n" style="left:49px">FLOOR_FACING_22</span><svg class="a" style="left:216px;top:2px" width="9" height="16"><rect x=".5" y=".5" width="7" height="14.5" rx="1" fill="#a9a9a9" stroke="#333" stroke-width="1"/><path d="M1 6 L7 1 M1 10 L7 5 M1 14 L7 9" stroke="#555" stroke-width=".8"/></svg><span style="left:262px">D50R0.8-AL</span><span style="left:358px">13</span><span style="left:419px">00:01:31</span><span style="left:506px;width:37px;overflow:hidden">W1</span></div>
<div class="row" style="top:736px"><svg class="a" style="left:0;top:0" width="48" height="20" viewBox="0 0 48 20"><path d="M-3.6 10.8 L0.9000000000000004 15.8 L9 4.8" fill="none" stroke="#20d820" stroke-width="2" stroke-linecap="round"/><path d="M11.5 5.5 H16 L17.5 7.5 H25.5 V17.5 H11.5 Z" fill="#f2f2f2" stroke="#4a4a4a" stroke-width="1"/><path d="M17 10 H23.5 V15.5 H17 M19 12.8 H23.5" fill="none" stroke="#2aa6cc" stroke-width="1.3"/></svg><span class="n" style="left:30px">OP2</span><span style="left:419px">00:37:25</span></div>
<div class="row alt b" style="top:756px"><svg class="a" style="left:0;top:0" width="48" height="20" viewBox="0 0 48 20"><path d="M5 10.5 H13" stroke="#9a9a9a" stroke-width="1" stroke-dasharray="1 1.2"/><path d="M15.6 10.8 L20.1 15.8 L28.2 4.8" fill="none" stroke="#20d820" stroke-width="2" stroke-linecap="round"/><path d="M30.5 9 L37 5.5 L43.5 9 V14 L37 17.5 L30.5 14 Z" fill="#b9c4cc" stroke="#4a5560" stroke-width=".9"/><path d="M32 9.5 L37 7 L42 9.5 L37 12 Z" fill="#f08a30"/><path d="M33 11.5 L37 13.5 L41 11.5 L41 13 L37 15.5 L33 13 Z" fill="#39a9d6"/><rect x="41.5" y="2.5" width="4" height="9" fill="#9a9ea4" stroke="#444" stroke-width=".8"/><path d="M41.5 5.5 H45.5 M41.5 8.5 H45.5" stroke="#444" stroke-width=".5"/></svg><span class="n" style="left:49px">PLANAR_MILL_23</span><svg class="a" style="left:216px;top:2px" width="9" height="16"><rect x=".5" y=".5" width="7" height="14.5" rx="1" fill="#a9a9a9" stroke="#333" stroke-width="1"/><path d="M1 6 L7 1 M1 10 L7 5 M1 14 L7 9" stroke="#555" stroke-width=".8"/></svg><span style="left:262px">D6-16L-AL</span><span style="left:358px">2</span><span style="left:419px">00:18:27</span><span style="left:506px;width:37px;overflow:hidden">W2</span></div>
<div class="row" style="top:776px"><svg class="a" style="left:0;top:0" width="48" height="20" viewBox="0 0 48 20"><path d="M5 10.5 H13" stroke="#9a9a9a" stroke-width="1" stroke-dasharray="1 1.2"/><path d="M15.6 10.8 L20.1 15.8 L28.2 4.8" fill="none" stroke="#20d820" stroke-width="2" stroke-linecap="round"/><path d="M30.5 10.5 L38 6.5 L44 9.5 L36.5 13.5 Z" fill="#4aa8cf" stroke="#3a4a55" stroke-width=".8"/><path d="M30.5 10.5 V14 L36.5 17.5 V13.5 Z" fill="#8c969e" stroke="#3a4a55" stroke-width=".8"/><path d="M44 9.5 V13 L36.5 17.5 V13.5 Z" fill="#c9ced3" stroke="#3a4a55" stroke-width=".8"/><rect x="41.5" y="2.5" width="4" height="9" fill="#9a9ea4" stroke="#444" stroke-width=".8"/><path d="M41.5 5.5 H45.5 M41.5 8.5 H45.5" stroke="#444" stroke-width=".5"/></svg><span class="n" style="left:49px">FLOOR_FACING_24</span><span style="left:262px">D6-16L-AL</span><span style="left:358px">2</span><span style="left:419px">00:02:14</span><span style="left:506px;width:37px;overflow:hidden">W2</span></div>
<div class="row alt" style="top:796px"><svg class="a" style="left:0;top:0" width="48" height="20" viewBox="0 0 48 20"><path d="M5 10.5 H13" stroke="#9a9a9a" stroke-width="1" stroke-dasharray="1 1.2"/><path d="M15.6 10.8 L20.1 15.8 L28.2 4.8" fill="none" stroke="#20d820" stroke-width="2" stroke-linecap="round"/><path d="M30.5 10.5 L38 6.5 L44 9.5 L36.5 13.5 Z" fill="#4aa8cf" stroke="#3a4a55" stroke-width=".8"/><path d="M30.5 10.5 V14 L36.5 17.5 V13.5 Z" fill="#8c969e" stroke="#3a4a55" stroke-width=".8"/><path d="M44 9.5 V13 L36.5 17.5 V13.5 Z" fill="#c9ced3" stroke="#3a4a55" stroke-width=".8"/><rect x="41.5" y="2.5" width="4" height="9" fill="#9a9ea4" stroke="#444" stroke-width=".8"/><path d="M41.5 5.5 H45.5 M41.5 8.5 H45.5" stroke="#444" stroke-width=".5"/></svg><span class="n" style="left:49px">FLOOR_FACING_25</span><span style="left:262px">D6-16L-AL</span><span style="left:358px">2</span><span style="left:419px">00:05:54</span><span style="left:506px;width:37px;overflow:hidden">W2</span></div>
<div class="row" style="top:816px"><svg class="a" style="left:0;top:0" width="48" height="20" viewBox="0 0 48 20"><path d="M5 10.5 H13" stroke="#9a9a9a" stroke-width="1" stroke-dasharray="1 1.2"/><path d="M15.6 10.8 L20.1 15.8 L28.2 4.8" fill="none" stroke="#20d820" stroke-width="2" stroke-linecap="round"/><path d="M30.5 9 L37 5.5 L43.5 9 V14 L37 17.5 L30.5 14 Z" fill="#b9c4cc" stroke="#4a5560" stroke-width=".9"/><path d="M32 9.5 L37 7 L42 9.5 L37 12 Z" fill="#f08a30"/><path d="M33 11.5 L37 13.5 L41 11.5 L41 13 L37 15.5 L33 13 Z" fill="#39a9d6"/><rect x="41.5" y="2.5" width="4" height="9" fill="#9a9ea4" stroke="#444" stroke-width=".8"/><path d="M41.5 5.5 H45.5 M41.5 8.5 H45.5" stroke="#444" stroke-width=".5"/></svg><span class="n" style="left:49px">PLANAR_MILL_26</span><span style="left:262px">D6-16L-AL</span><span style="left:358px">2</span><span style="left:419px">00:01:14</span><span style="left:506px;width:37px;overflow:hidden">W2</span></div>
<div class="row alt b" style="top:836px"><svg class="a" style="left:0;top:0" width="48" height="20" viewBox="0 0 48 20"><path d="M5 10.5 H13" stroke="#9a9a9a" stroke-width="1" stroke-dasharray="1 1.2"/><path d="M15.6 10.8 L20.1 15.8 L28.2 4.8" fill="none" stroke="#20d820" stroke-width="2" stroke-linecap="round"/><path d="M30.8 4.8 H32.5 L43.6 15.2 V17 H30.8 Z" fill="#fff" stroke="#111" stroke-width="1.4" stroke-linejoin="miter"/><path d="M33.6 9.5 V15 H38.6" fill="none" stroke="#111" stroke-width="1.2"/><path d="M33.6 10.5 Q34 8.5 35.6 8.2 M38.4 14.8 Q39.5 14 40 12.8" fill="none" stroke="#1a22d0" stroke-width="1.2"/><path d="M37 10.7 L38 7.6 L44 2.6 L46 4.8 L40 10 Z" fill="#3946c8" stroke="#2530a8" stroke-width=".5"/></svg><span class="n" style="left:49px;letter-spacing:0">2D-打点_27</span><svg class="a" style="left:216px;top:2px" width="9" height="16"><rect x=".5" y=".5" width="7" height="14.5" rx="1" fill="#a9a9a9" stroke="#333" stroke-width="1"/><path d="M1 6 L7 1 M1 10 L7 5 M1 14 L7 9" stroke="#555" stroke-width=".8"/></svg><span style="left:262px">DJ4-45-AL</span><span style="left:358px">1</span><span style="left:419px">00:00:05</span><span style="left:506px;width:37px;overflow:hidden">W2</span></div>
<div class="row" style="top:856px"><svg class="a" style="left:0;top:0" width="48" height="20" viewBox="0 0 48 20"><path d="M5 10.5 H13" stroke="#9a9a9a" stroke-width="1" stroke-dasharray="1 1.2"/><path d="M15.6 10.8 L20.1 15.8 L28.2 4.8" fill="none" stroke="#20d820" stroke-width="2" stroke-linecap="round"/><path d="M30.5 9 L37 5.5 L43.5 9 V14 L37 17.5 L30.5 14 Z" fill="#b9c4cc" stroke="#4a5560" stroke-width=".9"/><path d="M32 9.5 L37 7 L42 9.5 L37 12 Z" fill="#f08a30"/><path d="M33 11.5 L37 13.5 L41 11.5 L41 13 L37 15.5 L33 13 Z" fill="#39a9d6"/><rect x="41.5" y="2.5" width="4" height="9" fill="#9a9ea4" stroke="#444" stroke-width=".8"/><path d="M41.5 5.5 H45.5 M41.5 8.5 H45.5" stroke="#444" stroke-width=".5"/></svg><span class="n" style="left:49px">PLANAR_MILL_28</span><span style="left:262px">DJ4-45-AL</span><span style="left:358px">1</span><span style="left:419px">00:00:17</span><span style="left:506px;width:37px;overflow:hidden">W2</span></div>
<div class="row alt b" style="top:876px"><svg class="a" style="left:0;top:0" width="48" height="20" viewBox="0 0 48 20"><path d="M5 10.5 H13" stroke="#9a9a9a" stroke-width="1" stroke-dasharray="1 1.2"/><path d="M15.6 10.8 L20.1 15.8 L28.2 4.8" fill="none" stroke="#20d820" stroke-width="2" stroke-linecap="round"/><path d="M30.5 10.5 L38 6.5 L44 9.5 L36.5 13.5 Z" fill="#4aa8cf" stroke="#3a4a55" stroke-width=".8"/><path d="M30.5 10.5 V14 L36.5 17.5 V13.5 Z" fill="#8c969e" stroke="#3a4a55" stroke-width=".8"/><path d="M44 9.5 V13 L36.5 17.5 V13.5 Z" fill="#c9ced3" stroke="#3a4a55" stroke-width=".8"/><rect x="41.5" y="2.5" width="4" height="9" fill="#9a9ea4" stroke="#444" stroke-width=".8"/><path d="M41.5 5.5 H45.5 M41.5 8.5 H45.5" stroke="#444" stroke-width=".5"/></svg><span class="n" style="left:49px">FLOOR_FACING_29</span><svg class="a" style="left:216px;top:2px" width="9" height="16"><rect x=".5" y=".5" width="7" height="14.5" rx="1" fill="#a9a9a9" stroke="#333" stroke-width="1"/><path d="M1 6 L7 1 M1 10 L7 5 M1 14 L7 9" stroke="#555" stroke-width=".8"/></svg><span style="left:262px">D4-12L-AL</span><span style="left:358px">3</span><span style="left:419px">00:00:50</span><span style="left:506px;width:37px;overflow:hidden">W2</span></div>
<div class="a" style="left:4px;top:256px;width:0;height:30px;border-left:1px dotted #a8a8a8"></div>
<div class="a" style="left:4px;top:336px;width:0;height:390px;border-left:1px dotted #a8a8a8"></div>
<div class="a" style="left:4px;top:756px;width:0;height:140px;border-left:1px dotted #a8a8a8"></div>
<div class="csep" style="left:257px"></div>
<div class="csep" style="left:353px"></div>
<div class="csep" style="left:414px"></div>
<div class="csep" style="left:501px"></div>
<div class="a" style="left:207px;top:175px;width:1px;height:719px;background:#000"></div>
<div class="a" style="left:543px;top:175px;width:18px;height:720px;background:#f0f0f0"></div>
<div class="a" style="left:544px;top:193px;width:15px;height:172px;background:#cdcdcd"></div>
<svg class="a" style="left:546px;top:180px" width="12" height="8"><path d="M2 6.5 L6 2.5 L10 6.5" fill="none" stroke="#444" stroke-width="1.3"/></svg>
<svg class="a" style="left:546px;top:881px" width="12" height="8"><path d="M2 1.5 L6 5.5 L10 1.5" fill="none" stroke="#444" stroke-width="1.3"/></svg>
<div class="a" style="left:0;top:894px;width:561px;height:13px;background:#f0f0f0"></div>
<div class="a" style="left:0;top:895px;width:256px;height:12px;background:#cdcdcd"></div>
<svg class="a" style="left:530px;top:896px" width="8" height="11"><path d="M1.5 1.5 L5.5 5.5 L1.5 9.5" fill="none" stroke="#444" stroke-width="1.3"/></svg>
<div class="a" style="left:561px;top:154px;width:1px;height:753px;background:#e2e2e2"></div>
<svg class="a" style="left:578px;top:111px" width="1089" height="796" viewBox="578 111 1089 796">
<defs><linearGradient id="pg" x1="0" x2="1" y1="0" y2="0"><stop offset="0" stop-color="#7a7a7a"/><stop offset=".55" stop-color="#a2a2a2"/><stop offset="1" stop-color="#6c6c6c"/></linearGradient><linearGradient id="tg" x1="0" x2="1" y1="0" y2="0"><stop offset="0" stop-color="#2c2c2c"/><stop offset=".45" stop-color="#4a4a4a"/><stop offset="1" stop-color="#8a8a8a"/></linearGradient><linearGradient id="lg" x1="0" x2="1" y1="0" y2="0"><stop offset="0" stop-color="#9a9275"/><stop offset=".5" stop-color="#a89f7c"/><stop offset="1" stop-color="#c2b78f"/></linearGradient><linearGradient id="yg" x1="0" x2="1" y1="1" y2="0"><stop offset="0" stop-color="#fde381"/><stop offset="1" stop-color="#fde381"/></linearGradient><linearGradient id="yp" x1="0" x2="1" y1="1" y2="0"><stop offset="0" stop-color="#fde381"/><stop offset=".5" stop-color="#fae083"/><stop offset=".62" stop-color="#ecdb96"/><stop offset="1" stop-color="#e6d79b"/></linearGradient><linearGradient id="yq" x1="0" x2="1" y1="1" y2="0"><stop offset="0" stop-color="#f3dd8c"/><stop offset=".4" stop-color="#ecda93"/><stop offset="1" stop-color="#e8d89a"/></linearGradient><linearGradient id="yr" x1="0" x2="1" y1="1" y2="0"><stop offset="0" stop-color="#f1dc8e"/><stop offset=".38" stop-color="#eedb92"/><stop offset=".5" stop-color="#fde381"/><stop offset="1" stop-color="#fde381"/></linearGradient></defs>
<polygon points="744.8,433.3 756.3,439.3 756.3,488.9 744.8,482.9" fill="#bcbcbc" stroke="#2e2e2e" stroke-width="0.7" stroke-linejoin="round" />
<polygon points="877.8,356.8 889.3,363.4 889.3,413.0 877.8,406.4" fill="#bcbcbc" stroke="#2e2e2e" stroke-width="0.7" stroke-linejoin="round" />
<polygon points="718.8,448.0 744.8,433.3 744.8,482.9 718.8,497.6" fill="#b3b3b3" stroke="#2e2e2e" stroke-width="0.7" stroke-linejoin="round" />
<polygon points="756.3,439.3 807.7,410.2 807.7,459.8 756.3,488.9" fill="#b1b1b1" stroke="#2e2e2e" stroke-width="0.7" stroke-linejoin="round" />
<polygon points="796.4,403.5 877.8,356.8 877.8,406.4 796.4,453.1" fill="#b1b1b1" stroke="#2e2e2e" stroke-width="0.7" stroke-linejoin="round" />
<polygon points="889.3,363.4 941.1,334.5 941.1,384.1 889.3,413.0" fill="#b0b0b0" stroke="#2e2e2e" stroke-width="0.7" stroke-linejoin="round" />
<polygon points="929.4,327.4 955.0,312.4 955.0,362.0 929.4,377.0" fill="#b0b0b0" stroke="#2e2e2e" stroke-width="0.7" stroke-linejoin="round" />
<polygon points="807.7,410.2 796.4,403.5 796.4,453.1 807.7,459.8" fill="#7d7d7d" stroke="#2e2e2e" stroke-width="0.7" stroke-linejoin="round" />
<polygon points="941.1,334.5 929.4,327.4 929.4,377.0 941.1,384.1" fill="#8d8d8d" stroke="#2e2e2e" stroke-width="0.7" stroke-linejoin="round" />
<polygon points="1343.4,548.2 1355.1,541.8 1355.1,591.4 1343.4,597.8" fill="#b6b6b6" stroke="#2e2e2e" stroke-width="0.7" stroke-linejoin="round" />
<polygon points="955.0,312.4 1280.5,498.8 1280.5,548.4 955.0,362.0" fill="#a9a9a9" stroke="#2e2e2e" stroke-width="0.7" stroke-linejoin="round" />
<polygon points="1268.4,505.9 1343.4,548.2 1343.4,597.8 1268.4,555.5" fill="#ababab" stroke="#2e2e2e" stroke-width="0.7" stroke-linejoin="round" />
<polygon points="1355.1,541.8 1680.4,727.0 1680.4,776.6 1355.1,591.4" fill="#a9a9a9" stroke="#2e2e2e" stroke-width="0.7" stroke-linejoin="round" />
<polygon points="1280.5,498.8 1268.4,505.9 1268.4,555.5 1280.5,548.4" fill="#8f8f8f" stroke="#2e2e2e" stroke-width="0.7" stroke-linejoin="round" />
<polygon points="955.0,362.0 1280.5,548.4 1268.4,555.5 1343.4,597.8 1355.1,591.4 1680.4,776.6 1653.8,791.9 1641.7,786.4 1590.9,816.2 1601.9,822.8 1520.8,869.1 1509.3,863.6 1457.4,891.2 1469.6,898.9 1443.8,913.2 856.6,575.5 863.7,572.2 783.8,527.4 776.5,530.3 718.8,497.6 744.8,482.9 756.3,488.9 807.7,459.8 796.4,453.1 877.8,406.4 889.3,413.0 941.1,384.1 929.4,377.0" fill="#cbcbcb" />
<polygon points="768.8,471.5 771.5,464.4 782.1,457.9 812.9,468.8 853.5,484.7 853.5,504.1 839.4,512.1 828.8,516.5 812.9,516.8 777.6,497.4 769.7,490.9 768.5,480.3" fill="#e4c65d" />
<polygon points="857.0,512.6 858.9,508.7 863.1,506.3 869.7,504.1 938.6,538.5 938.6,551.8 929.3,557.5 914.9,562.2 907.2,564.1 898.4,561.9 863.1,542.1 857.0,536.9" fill="#e4c65d" />
<polygon points="953.8,576.2 956.5,571.8 963.5,567.9 1027.9,578.8 1027.9,600.3 1012.9,607.4 998.8,612.7 988.2,611.8 954.7,593.3" fill="#e4c65d" />
<polygon points="1037.6,609.4 1041.2,603.2 1051.8,598.5 1120.6,625.3 1120.6,642.9 1102.9,651.8 1090.6,655.6 1078.2,653.5 1037.6,630.6" fill="#e4c65d" />
<polygon points="1143.6,668.9 1147.0,661.8 1156.9,656.1 1339.6,608.0 1339.6,622.2 1311.3,636.3 1288.6,647.6 1266.0,659.0 1249.0,666.1 1241.9,673.1 1240.5,698.6 1223.5,710.0 1209.3,716.2 1195.2,715.1 1143.6,687.3" fill="#e4c65d" />
<polygon points="1218.4,721.3 1222.1,714.2 1232.0,708.6 1426.0,656.1 1426.0,673.1 1399.1,685.9 1373.6,698.6 1351.0,710.0 1334.0,717.1 1328.3,724.1 1328.3,749.6 1311.3,761.0 1288.6,769.5 1277.3,770.9 1266.0,766.6 1218.4,741.1" fill="#e4c65d" />
<polygon points="1305.6,769.0 1309.8,763.3 1318.3,759.1 1512.4,702.4 1512.4,722.2 1488.3,735.0 1460.0,746.3 1437.3,759.1 1417.5,769.0 1411.8,791.6 1403.3,797.3 1375.0,812.9 1360.8,820.0 1346.7,817.1 1305.6,794.5" fill="#e4c65d" />
<polygon points="1387.7,820.0 1392.0,812.9 1400.5,808.6 1583.2,760.5 1583.2,778.9 1562.0,790.2 1539.3,801.6 1516.6,813.7 1496.8,817.7 1492.5,821.4 1492.5,840.4 1485.5,846.9 1448.6,865.3 1431.6,870.4 1417.5,866.7 1387.7,848.3" fill="#e4c65d" />
<polygon points="1168.5,654.1 1181.2,646.2 1182.9,664.7 1187.3,672.6 1172.4,678.8 1168.5,673.5" fill="#cbcbcb" />
<polygon points="1243.5,712.3 1256.2,705.3 1258.0,722.9 1261.2,726.5 1247.9,733.5 1243.5,730.0" fill="#cbcbcb" />
<polygon points="1330.9,759.4 1342.9,752.3 1344.7,771.8 1349.1,777.1 1335.0,784.1 1330.9,778.8" fill="#cbcbcb" />
<polygon points="1412.0,811.2 1422.9,804.1 1424.7,823.5 1430.9,827.9 1416.2,835.9 1412.0,830.6" fill="#cbcbcb" />
<g fill-opacity="1"><path d="M997.4 375.5 V428.0 A10 5.6 0 0 0 1017.4 428.0 V375.5 Z" fill="url(#pg)"/><ellipse cx="1007.4" cy="428.0" rx="10" ry="5.6" fill="none" stroke="#3a3a3a" stroke-width=".6" stroke-opacity=".6"/><ellipse cx="1007.4" cy="375.5" rx="10" ry="5.6" fill="#7c7c7c" stroke="#3a3a3a" stroke-width=".8"/></g>
<g fill-opacity="1"><path d="M1558.9 698.5 V750.0 A10 5.6 0 0 0 1578.9 750.0 V698.5 Z" fill="url(#pg)"/><ellipse cx="1568.9" cy="750.0" rx="10" ry="5.6" fill="none" stroke="#3a3a3a" stroke-width=".6" stroke-opacity=".6"/><ellipse cx="1568.9" cy="698.5" rx="10" ry="5.6" fill="#7c7c7c" stroke="#3a3a3a" stroke-width=".8"/></g>
<polygon points="974.8,392.9 968.2,400.0 968.2,421.0 974.8,413.9" fill="#b1a783" />
<polygon points="968.2,400.0 949.7,401.4 949.7,422.4 968.2,421.0" fill="#a69e7d" />
<polygon points="949.7,401.4 948.5,396.8 948.5,417.8 949.7,422.4" fill="#968e72" />
<polygon points="948.5,396.8 925.9,383.2 925.9,404.2 948.5,417.8" fill="#9d9577" />
<polygon points="925.9,383.2 936.5,379.7 952.3,377.1 968.2,379.7 974.8,387.6 974.8,392.9 968.2,400.0 949.7,401.4 948.5,396.8" fill="#e2d49c" />
<path d="M936.0 389.5 V410.5 A18.5 11 0 0 0 973.0 410.5 V389.5 Z" fill="url(#lg)"/><ellipse cx="954.5" cy="389.5" rx="18.5" ry="11" fill="#e2d49c" stroke="#b3a97f" stroke-width=".5"/>
<ellipse cx="953.0" cy="389.5" rx="3.4" ry="2.3" fill="#9c9474"/>
<polygon points="940.0,412.4 929.4,422.9 929.4,437.9 940.0,427.4" fill="#a59d7c" />
<polygon points="929.4,422.9 922.3,440.6 922.3,455.6 929.4,437.9" fill="#a69e7d" />
<polygon points="922.3,440.6 906.5,450.3 906.5,465.3 922.3,455.6" fill="#a39b7b" />
<polygon points="906.5,450.3 872.9,457.3 872.9,472.3 906.5,465.3" fill="#9f9879" />
<polygon points="872.9,457.3 860.6,462.6 860.6,477.6 872.9,472.3" fill="#a19a7a" />
<polygon points="940.0,412.4 929.4,422.9 929.4,433.4 940.0,422.9" fill="#dbce9a" />
<polygon points="929.4,422.9 922.3,440.6 922.3,451.1 929.4,433.4" fill="#dccf9b" />
<polygon points="922.3,440.6 906.5,450.3 906.5,460.8 922.3,451.1" fill="#d5c897" />
<polygon points="906.5,450.3 872.9,457.3 872.9,467.8 906.5,460.8" fill="#cabf91" />
<polygon points="872.9,457.3 860.6,462.6 860.6,473.1 872.9,467.8" fill="#d0c595" />
<polygon points="949.7,401.4 940.3,406.2 940.3,427.2 949.7,422.4" fill="#aca381" />
<polygon points="940.3,406.2 940.0,412.4 940.0,433.4 940.3,427.2" fill="#b5ab86" />
<polygon points="780.8,450.3 788.2,456.5 807.6,445.0 816.5,445.9 837.6,452.6 851.8,458.2 860.6,462.6 860.6,479.4 851.8,482.9 837.6,491.8 818.3,493.5 795.3,479.4 782.0,472.4" fill="#868069" />
<polygon points="780.8,450.3 788.2,456.5 788.2,474.5 795.3,479.4 782.0,472.4" fill="#a9a17f" />
<ellipse cx="798.3" cy="465.3" rx="4.2" ry="7" transform="rotate(28 798.3 465.3)" fill="#e3cf86" stroke="#c9bc8c" stroke-width="1.2"/>
<polygon points="795.3,479.4 811.6,472.0 837.6,482.6 837.6,491.8 818.3,493.5" fill="#c9bd8f" />
<polygon points="851.8,458.2 860.6,462.6 860.6,479.4 851.8,482.9" fill="#9c9577" />
<polygon points="780.8,450.3 820.9,426.5 844.7,426.1 919.7,382.7 925.9,383.2 948.5,396.8 949.7,401.4 940.3,406.2 940.0,412.4 929.4,422.9 922.3,440.6 906.5,450.3 872.9,457.3 860.6,462.6 851.8,458.2 837.6,452.6 816.5,445.9 807.6,445.0 788.2,456.5" fill="url(#yg)" stroke="#a3913f" stroke-width="0.7" stroke-linejoin="round" />
<clipPath id="c1"><polygon points="780.8,450.3 820.9,426.5 844.7,426.1 919.7,382.7 925.9,383.2 948.5,396.8 949.7,401.4 940.3,406.2 940.0,412.4 929.4,422.9 922.3,440.6 906.5,450.3 872.9,457.3 860.6,462.6 851.8,458.2 837.6,452.6 816.5,445.9 807.6,445.0 788.2,456.5"/></clipPath><g clip-path="url(#c1)" fill="#ecdb98" fill-opacity="0.75"><polygon points="917.0,441.0 870.9,456.6 865.5,448.2"/><polygon points="917.0,441.0 876.0,449.7 873.9,444.4"/><polygon points="917.0,441.0 884.3,439.4 886.2,434.2"/><polygon points="917.0,441.0 882.3,456.2 876.6,449.9"/><polygon points="917.0,441.0 875.4,433.6 877.0,431.0"/></g>
<text transform="matrix(-0.869,0.495,-0.869,-0.494,876.5,430.9)" x="-17" y="10" font-family="Liberation Sans,sans-serif" font-size="28" fill="none" stroke="#c4b474" stroke-width="1.2">L2</text>
<polygon points="1074.8,435.3 1067.3,441.5 1067.3,462.5 1074.8,456.3" fill="#afa682" />
<polygon points="1067.3,441.5 1049.2,442.4 1049.2,463.4 1067.3,462.5" fill="#a69d7c" />
<polygon points="1049.2,442.4 1047.9,437.9 1047.9,458.9 1049.2,463.4" fill="#968f72" />
<polygon points="1047.9,437.9 1025.0,422.9 1025.0,443.9 1047.9,458.9" fill="#9c9577" />
<polygon points="1025.0,422.9 1036.5,419.4 1054.1,418.2 1070.0,422.1 1074.8,430.9 1074.8,435.3 1067.3,441.5 1049.2,442.4 1047.9,437.9" fill="#e2d49c" />
<path d="M1036.6 429.1 V450.1 A18.5 11 0 0 0 1073.6 450.1 V429.1 Z" fill="url(#lg)"/><ellipse cx="1055.1" cy="429.1" rx="18.5" ry="11" fill="#e2d49c" stroke="#b3a97f" stroke-width=".5"/>
<ellipse cx="1053.6" cy="429.1" rx="3.4" ry="2.3" fill="#9c9474"/>
<polygon points="1040.9,452.9 1029.4,463.5 1029.4,478.5 1040.9,467.9" fill="#a49c7c" />
<polygon points="1029.4,463.5 1018.8,482.9 1018.8,497.9 1029.4,478.5" fill="#a69e7d" />
<polygon points="1018.8,482.9 992.3,498.8 992.3,513.8 1018.8,497.9" fill="#a39b7b" />
<polygon points="992.3,498.8 958.8,504.1 958.8,519.1 992.3,513.8" fill="#9f9779" />
<polygon points="958.8,504.1 937.6,506.8 937.6,521.8 958.8,519.1" fill="#9e9779" />
<polygon points="1040.9,452.9 1029.4,463.5 1029.4,474.0 1040.9,463.4" fill="#dacd9a" />
<polygon points="1029.4,463.5 1018.8,482.9 1018.8,493.4 1029.4,474.0" fill="#dccf9b" />
<polygon points="1018.8,482.9 992.3,498.8 992.3,509.3 1018.8,493.4" fill="#d4c897" />
<polygon points="992.3,498.8 958.8,504.1 958.8,514.6 992.3,509.3" fill="#c9be90" />
<polygon points="958.8,504.1 937.6,506.8 937.6,517.3 958.8,514.6" fill="#c8bd90" />
<polygon points="1049.2,442.4 1040.0,447.6 1040.0,468.6 1049.2,463.4" fill="#ada481" />
<polygon points="868.8,496.2 876.8,502.3 896.2,491.8 904.1,491.8 918.2,496.2 928.8,502.0 937.6,506.8 937.6,523.6 928.8,526.7 918.2,535.4 905.9,539.4 883.9,525.2 870.0,518.3" fill="#868069" />
<polygon points="868.8,496.2 876.8,502.3 876.8,520.3 883.9,525.2 870.0,518.3" fill="#a9a17f" />
<ellipse cx="886.3" cy="511.2" rx="4.2" ry="7" transform="rotate(28 886.3 511.2)" fill="#e3cf86" stroke="#c9bc8c" stroke-width="1.2"/>
<polygon points="883.9,525.2 900.2,518.8 918.2,526.2 918.2,535.4 905.9,539.4" fill="#c9bd8f" />
<polygon points="928.8,502.0 937.6,506.8 937.6,523.6 928.8,526.7" fill="#9c9577" />
<polygon points="868.8,496.2 911.2,473.2 932.3,472.0 1019.7,422.6 1025.0,422.9 1047.9,437.9 1049.2,442.4 1040.0,447.6 1040.9,452.9 1029.4,463.5 1018.8,482.9 992.3,498.8 958.8,504.1 937.6,506.8 928.8,502.0 918.2,496.2 904.1,491.8 896.2,491.8 876.8,502.3" fill="url(#yg)" stroke="#a3913f" stroke-width="0.7" stroke-linejoin="round" />
<clipPath id="c2"><polygon points="868.8,496.2 911.2,473.2 932.3,472.0 1019.7,422.6 1025.0,422.9 1047.9,437.9 1049.2,442.4 1040.0,447.6 1040.9,452.9 1029.4,463.5 1018.8,482.9 992.3,498.8 958.8,504.1 937.6,506.8 928.8,502.0 918.2,496.2 904.1,491.8 896.2,491.8 876.8,502.3"/></clipPath><g clip-path="url(#c2)" fill="#ecdb98" fill-opacity="0.75"><polygon points="990.0,482.0 1008.6,488.0 1004.8,491.1"/><polygon points="990.0,482.0 1019.4,470.9 1023.4,476.2"/><polygon points="990.0,482.0 1021.4,486.0 1019.8,489.1"/><polygon points="990.0,482.0 1013.0,483.5 1011.9,486.5"/></g>
<text transform="matrix(-0.869,0.495,-0.869,-0.494,974.7,474.1)" x="-17" y="10" font-family="Liberation Sans,sans-serif" font-size="28" fill="none" stroke="#c4b474" stroke-width="1.2">L1</text>
<polygon points="1161.8,485.3 1154.4,491.5 1154.4,512.5 1161.8,506.3" fill="#afa682" />
<polygon points="1154.4,491.5 1135.9,491.5 1135.9,512.5 1154.4,512.5" fill="#a59c7c" />
<polygon points="1135.9,491.5 1134.1,486.2 1134.1,507.2 1135.9,512.5" fill="#968f73" />
<polygon points="1134.1,486.2 1112.0,472.1 1112.0,493.1 1134.1,507.2" fill="#9c9577" />
<polygon points="1112.0,472.1 1125.3,467.6 1142.9,466.8 1157.0,471.5 1161.8,480.9 1161.8,485.3 1154.4,491.5 1135.9,491.5 1134.1,486.2" fill="#e2d49c" />
<path d="M1123.3 479.1 V500.1 A18.5 11 0 0 0 1160.3 500.1 V479.1 Z" fill="url(#lg)"/><ellipse cx="1141.8" cy="479.1" rx="18.5" ry="11" fill="#e2d49c" stroke="#b3a97f" stroke-width=".5"/>
<ellipse cx="1140.3" cy="479.1" rx="3.4" ry="2.3" fill="#9c9474"/>
<polygon points="1127.0,502.9 1114.7,515.3 1114.7,530.3 1127.0,517.9" fill="#a59d7c" />
<polygon points="1114.7,515.3 1107.6,534.7 1107.6,549.7 1114.7,530.3" fill="#a69e7d" />
<polygon points="1107.6,534.7 1077.6,548.8 1077.6,563.8 1107.6,549.7" fill="#a29a7a" />
<polygon points="1077.6,548.8 1049.4,554.1 1049.4,569.1 1077.6,563.8" fill="#9f9779" />
<polygon points="1049.4,554.1 1035.3,559.4 1035.3,574.4 1049.4,569.1" fill="#a1997a" />
<polygon points="1127.0,502.9 1114.7,515.3 1114.7,525.8 1127.0,513.4" fill="#dbce9a" />
<polygon points="1114.7,515.3 1107.6,534.7 1107.6,545.2 1114.7,525.8" fill="#dccf9b" />
<polygon points="1107.6,534.7 1077.6,548.8 1077.6,559.3 1107.6,545.2" fill="#d1c595" />
<polygon points="1077.6,548.8 1049.4,554.1 1049.4,564.6 1077.6,559.3" fill="#cabe91" />
<polygon points="1049.4,554.1 1035.3,559.4 1035.3,569.9 1049.4,564.6" fill="#cfc394" />
<polygon points="1135.9,491.5 1127.0,496.8 1127.0,517.8 1135.9,512.5" fill="#ada481" />
<polygon points="959.4,550.6 966.5,554.1 984.1,541.8 992.9,542.6 1014.1,550.6 1026.5,554.1 1035.3,559.4 1035.3,576.2 1026.5,578.8 1014.1,589.8 994.7,590.2 973.6,577.0 960.6,572.7" fill="#868069" />
<polygon points="959.4,550.6 966.5,554.1 966.5,572.1 973.6,577.0 960.6,572.7" fill="#a9a17f" />
<ellipse cx="976.9" cy="565.6" rx="4.2" ry="7" transform="rotate(28 976.9 565.6)" fill="#e3cf86" stroke="#c9bc8c" stroke-width="1.2"/>
<polygon points="973.6,577.0 988.1,568.8 1014.1,580.6 1014.1,589.8 994.7,590.2" fill="#c9bd8f" />
<polygon points="1026.5,554.1 1035.3,559.4 1035.3,576.2 1026.5,578.8" fill="#9c9577" />
<polygon points="959.4,550.6 998.2,522.3 1019.4,521.5 1107.6,472.1 1112.0,472.1 1134.1,486.2 1135.9,491.5 1127.0,496.8 1127.0,502.9 1114.7,515.3 1107.6,534.7 1077.6,548.8 1049.4,554.1 1035.3,559.4 1026.5,554.1 1014.1,550.6 992.9,542.6 984.1,541.8 966.5,554.1" fill="url(#yp)" stroke="#a3913f" stroke-width="0.7" stroke-linejoin="round" />
<clipPath id="c3"><polygon points="959.4,550.6 998.2,522.3 1019.4,521.5 1107.6,472.1 1112.0,472.1 1134.1,486.2 1135.9,491.5 1127.0,496.8 1127.0,502.9 1114.7,515.3 1107.6,534.7 1077.6,548.8 1049.4,554.1 1035.3,559.4 1026.5,554.1 1014.1,550.6 992.9,542.6 984.1,541.8 966.5,554.1"/></clipPath><g clip-path="url(#c3)" fill="#fde381" fill-opacity="0.75"><polygon points="1118.0,508.0 1074.7,524.5 1069.7,518.5"/><polygon points="1118.0,508.0 1078.1,506.5 1079.8,500.9"/><polygon points="1118.0,508.0 1092.1,531.7 1082.2,526.5"/><polygon points="1118.0,508.0 1073.1,527.2 1065.4,518.0"/><polygon points="1118.0,508.0 1063.6,490.8 1070.6,484.5"/><polygon points="1118.0,508.0 1065.7,536.0 1056.2,527.8"/><polygon points="1118.0,508.0 1055.6,511.4 1056.2,501.6"/></g>
<text transform="matrix(-0.869,0.495,-0.869,-0.494,1056.5,524.1)" x="-17" y="10" font-family="Liberation Sans,sans-serif" font-size="28" fill="none" stroke="#c4b474" stroke-width="1.2">L1</text>
<polygon points="1243.0,536.2 1235.6,542.4 1235.6,563.4 1243.0,557.2" fill="#afa682" />
<polygon points="1235.6,542.4 1217.3,542.4 1217.3,563.4 1235.6,563.4" fill="#a59c7c" />
<polygon points="1217.3,542.4 1215.9,537.1 1215.9,558.1 1217.3,563.4" fill="#968e72" />
<polygon points="1215.9,537.1 1193.8,522.9 1193.8,543.9 1215.9,558.1" fill="#9c9577" />
<polygon points="1193.8,522.9 1207.0,518.5 1224.7,517.6 1238.8,522.6 1243.0,531.8 1243.0,536.2 1235.6,542.4 1217.3,542.4 1215.9,537.1" fill="#e2d49c" />
<path d="M1204.7 529.6 V550.6 A18.5 11 0 0 0 1241.7 550.6 V529.6 Z" fill="url(#lg)"/><ellipse cx="1223.2" cy="529.6" rx="18.5" ry="11" fill="#e2d49c" stroke="#b3a97f" stroke-width=".5"/>
<ellipse cx="1221.7" cy="529.6" rx="3.4" ry="2.3" fill="#9c9474"/>
<polygon points="1208.8,552.9 1196.5,565.3 1196.5,580.3 1208.8,567.9" fill="#a59d7c" />
<polygon points="1196.5,565.3 1189.4,577.6 1189.4,592.6 1196.5,580.3" fill="#a69e7d" />
<polygon points="1189.4,577.6 1173.5,590.0 1173.5,605.0 1189.4,592.6" fill="#a49c7c" />
<polygon points="1173.5,590.0 1143.5,597.1 1143.5,612.1 1173.5,605.0" fill="#9f9879" />
<polygon points="1143.5,597.1 1129.4,602.3 1129.4,617.3 1143.5,612.1" fill="#a1997a" />
<polygon points="1208.8,552.9 1196.5,565.3 1196.5,575.8 1208.8,563.4" fill="#dbce9a" />
<polygon points="1196.5,565.3 1189.4,577.6 1189.4,588.1 1196.5,575.8" fill="#dccf9b" />
<polygon points="1189.4,577.6 1173.5,590.0 1173.5,600.5 1189.4,588.1" fill="#d8cb99" />
<polygon points="1173.5,590.0 1143.5,597.1 1143.5,607.6 1173.5,600.5" fill="#cbc092" />
<polygon points="1143.5,597.1 1129.4,602.3 1129.4,612.8 1143.5,607.6" fill="#cfc394" />
<polygon points="1217.3,542.4 1208.8,547.6 1208.8,568.6 1217.3,563.4" fill="#ada481" />
<polygon points="1049.1,590.9 1057.1,596.2 1074.7,585.6 1083.5,586.5 1102.9,593.5 1118.8,597.9 1129.4,602.3 1129.4,619.1 1118.8,622.6 1102.9,632.7 1085.3,634.1 1064.2,619.1 1050.3,613.0" fill="#868069" />
<polygon points="1049.1,590.9 1057.1,596.2 1057.1,614.2 1064.2,619.1 1050.3,613.0" fill="#a9a17f" />
<ellipse cx="1066.6" cy="605.9" rx="4.2" ry="7" transform="rotate(28 1066.6 605.9)" fill="#e3cf86" stroke="#c9bc8c" stroke-width="1.2"/>
<polygon points="1064.2,619.1 1078.7,612.6 1102.9,623.5 1102.9,632.7 1085.3,634.1" fill="#c9bd8f" />
<polygon points="1118.8,597.9 1129.4,602.3 1129.4,619.1 1118.8,622.6" fill="#9c9577" />
<polygon points="1049.1,590.9 1088.8,567.1 1111.8,566.2 1189.4,522.9 1193.8,522.9 1215.9,537.1 1217.3,542.4 1208.8,547.6 1208.8,552.9 1196.5,565.3 1189.4,577.6 1173.5,590.0 1143.5,597.1 1129.4,602.3 1118.8,597.9 1102.9,593.5 1083.5,586.5 1074.7,585.6 1057.1,596.2" fill="url(#yq)" stroke="#a3913f" stroke-width="0.7" stroke-linejoin="round" />
<clipPath id="c4"><polygon points="1049.1,590.9 1088.8,567.1 1111.8,566.2 1189.4,522.9 1193.8,522.9 1215.9,537.1 1217.3,542.4 1208.8,547.6 1208.8,552.9 1196.5,565.3 1189.4,577.6 1173.5,590.0 1143.5,597.1 1129.4,602.3 1118.8,597.9 1102.9,593.5 1083.5,586.5 1074.7,585.6 1057.1,596.2"/></clipPath><g clip-path="url(#c4)" fill="#fde381" fill-opacity="0.75"><polygon points="1120.0,575.0 1128.4,608.1 1121.4,608.5"/><polygon points="1120.0,575.0 1154.2,601.6 1148.7,603.9"/><polygon points="1120.0,575.0 1176.1,549.3 1185.6,559.3"/><polygon points="1120.0,575.0 1134.4,604.4 1123.5,605.6"/><polygon points="1120.0,575.0 1145.4,599.9 1139.9,601.6"/><polygon points="1120.0,575.0 1179.9,550.7 1188.7,561.5"/><polygon points="1120.0,575.0 1132.7,544.5 1139.9,545.9"/><polygon points="1120.0,575.0 1061.8,547.4 1075.5,539.4"/><polygon points="1120.0,575.0 1164.1,547.0 1169.4,550.4"/><polygon points="1120.0,575.0 1093.5,551.6 1102.2,548.8"/><polygon points="1120.0,575.0 1044.6,585.5 1043.0,579.8"/><polygon points="1120.0,575.0 1150.0,549.5 1158.6,554.1"/></g>
<text transform="matrix(-0.869,0.495,-0.869,-0.494,1141.8,570.6)" x="-17" y="10" font-family="Liberation Sans,sans-serif" font-size="28" fill="none" stroke="#c4b474" stroke-width="1.2">L2</text>
<polygon points="1338.6,589.7 1331.2,596.2 1331.2,617.2 1338.6,610.7" fill="#b0a683" />
<polygon points="1331.2,596.2 1320.6,597.6 1320.6,618.6 1331.2,617.2" fill="#a79e7d" />
<polygon points="1320.6,597.6 1313.5,597.6 1313.5,618.6 1320.6,618.6" fill="#a59c7c" />
<polygon points="1313.5,592.4 1289.7,579.6 1289.7,600.6 1313.5,613.4" fill="#9d9677" />
<polygon points="1294.1,576.5 1302.9,573.3 1320.6,572.6 1332.9,576.8 1338.6,585.3 1338.6,589.7 1331.2,596.2 1320.6,597.6 1313.5,597.6 1313.5,592.4 1289.7,579.6" fill="#e2d49c" />
<path d="M1300.0 583.9 V600.9 A18.5 11 0 0 0 1337.0 600.9 V583.9 Z" fill="url(#lg)"/><ellipse cx="1318.5" cy="583.9" rx="18.5" ry="11" fill="#e2d49c" stroke="#b3a97f" stroke-width=".5"/>
<ellipse cx="1317.0" cy="583.9" rx="3.4" ry="2.3" fill="#9c9474"/>
<polygon points="1313.5,597.6 1244.7,634.7 1244.7,652.2 1313.5,615.1" fill="#9d9577" />
<polygon points="1244.7,634.7 1237.6,641.8 1237.6,662.8 1244.7,655.7" fill="#a1997a" />
<polygon points="1237.6,641.8 1234.1,650.6 1234.1,671.6 1237.6,662.8" fill="#a59d7c" />
<polygon points="1234.1,650.6 1214.7,662.9 1214.7,683.9 1234.1,671.6" fill="#9e9678" />
<polygon points="1214.7,662.9 1197.1,674.4 1197.1,695.4 1214.7,683.9" fill="#9e9678" />
<polygon points="1197.1,674.4 1187.3,671.8 1187.3,692.8 1197.1,695.4" fill="#8f8970" />
<polygon points="1205.9,655.9 1182.9,640.0 1182.9,661.0 1205.9,676.9" fill="#8a836d" />
<polygon points="1182.9,640.0 1181.2,632.9 1181.2,653.9 1182.9,661.0" fill="#837d68" />
<polygon points="1181.2,632.9 1174.1,630.3 1174.1,651.3 1181.2,653.9" fill="#8e876f" />
<polygon points="1313.5,603.6 1244.7,640.7 1244.7,647.2 1313.5,610.1" fill="#ded19c" />
<polygon points="1313.5,610.1 1244.7,647.2 1244.7,652.2 1313.5,615.1" fill="#dcc468" />
<polygon points="1308.2,607.5 1295.9,614.1 1295.9,620.6 1308.2,614.0" fill="#8d8770" />
<polygon points="1287.1,618.9 1278.3,623.6 1278.3,630.1 1287.1,625.4" fill="#8d8770" />
<polygon points="1174.1,630.3 1191.8,604.7 1214.7,593.2 1242.9,587.9 1257.1,580.9 1264.1,583.5 1285.3,577.4 1313.5,592.4 1313.5,597.6 1244.7,634.7 1237.6,641.8 1234.1,650.6 1214.7,662.9 1197.1,674.4 1187.3,671.8 1205.9,655.9 1182.9,640.0 1181.2,632.9" fill="url(#yr)" stroke="#a3913f" stroke-width="0.7" stroke-linejoin="round" />
<clipPath id="c5"><polygon points="1174.1,630.3 1191.8,604.7 1214.7,593.2 1242.9,587.9 1257.1,580.9 1264.1,583.5 1285.3,577.4 1313.5,592.4 1313.5,597.6 1244.7,634.7 1237.6,641.8 1234.1,650.6 1214.7,662.9 1197.1,674.4 1187.3,671.8 1205.9,655.9 1182.9,640.0 1181.2,632.9"/></clipPath><g clip-path="url(#c5)" fill="#fde381" fill-opacity="0.75"><polygon points="1240.0,592.0 1178.6,584.0 1184.1,574.8"/><polygon points="1240.0,592.0 1209.8,555.9 1226.3,552.5"/><polygon points="1240.0,592.0 1229.5,632.3 1216.3,630.2"/><polygon points="1240.0,592.0 1202.4,585.8 1207.0,579.5"/><polygon points="1240.0,592.0 1186.7,597.3 1186.0,592.3"/><polygon points="1240.0,592.0 1197.9,588.1 1198.8,585.4"/><polygon points="1240.0,592.0 1195.4,617.7 1184.8,608.7"/><polygon points="1240.0,592.0 1221.4,613.2 1212.7,609.4"/><polygon points="1240.0,592.0 1206.1,586.5 1207.6,583.9"/></g>
<text transform="matrix(0.869,-0.495,0.869,0.494,1225.3,620.6)" x="-17" y="10" font-family="Liberation Sans,sans-serif" font-size="28" fill="none" stroke="#c4b474" stroke-width="1.2">R2</text>
<polygon points="1425.3,636.8 1417.9,643.5 1417.9,664.5 1425.3,657.8" fill="#b0a683" />
<polygon points="1417.9,643.5 1407.3,644.9 1407.3,665.9 1417.9,664.5" fill="#a79e7d" />
<polygon points="1407.3,644.9 1401.5,645.3 1401.5,666.3 1407.3,665.9" fill="#a69d7d" />
<polygon points="1401.5,645.3 1400.6,640.0 1400.6,661.0 1401.5,666.3" fill="#958e72" />
<polygon points="1400.6,640.0 1376.8,627.1 1376.8,648.1 1400.6,661.0" fill="#9d9677" />
<polygon points="1380.8,623.8 1390.0,620.2 1407.6,619.7 1420.0,624.1 1425.3,632.6 1425.3,636.8 1417.9,643.5 1407.3,644.9 1401.5,645.3 1400.6,640.0 1376.8,627.1" fill="#e2d49c" />
<path d="M1387.1 631.2 V648.2 A18.5 11 0 0 0 1424.1 648.2 V631.2 Z" fill="url(#lg)"/><ellipse cx="1405.6" cy="631.2" rx="18.5" ry="11" fill="#e2d49c" stroke="#b3a97f" stroke-width=".5"/>
<ellipse cx="1404.1" cy="631.2" rx="3.4" ry="2.3" fill="#9c9474"/>
<polygon points="1401.5,645.3 1315.9,689.4 1315.9,706.9 1401.5,662.8" fill="#9c9577" />
<polygon points="1315.9,689.4 1313.2,698.2 1313.2,719.2 1315.9,710.4" fill="#a59d7d" />
<polygon points="1313.2,698.2 1309.7,705.3 1309.7,726.3 1313.2,719.2" fill="#a49c7c" />
<polygon points="1309.7,705.3 1280.6,716.8 1280.6,737.8 1309.7,726.3" fill="#9b9376" />
<polygon points="1280.6,716.8 1262.9,727.3 1262.9,748.3 1280.6,737.8" fill="#9d9678" />
<polygon points="1262.9,727.3 1259.4,724.7 1259.4,745.7 1262.9,748.3" fill="#89836c" />
<polygon points="1280.6,710.6 1258.0,696.5 1258.0,717.5 1280.6,731.6" fill="#8a846d" />
<polygon points="1258.0,696.5 1256.2,687.6 1256.2,708.6 1258.0,717.5" fill="#827c68" />
<polygon points="1401.5,651.3 1315.9,695.4 1315.9,701.9 1401.5,657.8" fill="#ded19c" />
<polygon points="1401.5,657.8 1315.9,701.9 1315.9,706.9 1401.5,662.8" fill="#dcc468" />
<polygon points="1396.1,655.0 1383.7,661.5 1383.7,668.0 1396.1,661.5" fill="#8d8770" />
<polygon points="1374.8,666.0 1365.9,670.6 1365.9,677.1 1374.8,672.5" fill="#8d8770" />
<polygon points="1256.2,677.1 1266.5,658.5 1280.6,647.9 1296.5,640.9 1322.9,636.5 1344.1,628.5 1360.0,630.3 1372.3,625.0 1400.6,640.0 1401.5,645.3 1315.9,689.4 1313.2,698.2 1309.7,705.3 1280.6,716.8 1262.9,727.3 1259.4,724.7 1280.6,710.6 1258.0,696.5 1256.2,687.6" fill="url(#yr)" stroke="#a3913f" stroke-width="0.7" stroke-linejoin="round" />
<clipPath id="c6"><polygon points="1256.2,677.1 1266.5,658.5 1280.6,647.9 1296.5,640.9 1322.9,636.5 1344.1,628.5 1360.0,630.3 1372.3,625.0 1400.6,640.0 1401.5,645.3 1315.9,689.4 1313.2,698.2 1309.7,705.3 1280.6,716.8 1262.9,727.3 1259.4,724.7 1280.6,710.6 1258.0,696.5 1256.2,687.6"/></clipPath><g clip-path="url(#c6)" fill="#fde381" fill-opacity="0.75"><polygon points="1320.0,655.0 1280.5,631.4 1292.8,625.9"/><polygon points="1320.0,655.0 1276.6,681.9 1272.2,679.0"/><polygon points="1320.0,655.0 1269.8,661.9 1268.5,653.8"/><polygon points="1320.0,655.0 1271.4,626.8 1279.6,622.5"/><polygon points="1320.0,655.0 1273.3,634.7 1280.5,629.7"/><polygon points="1320.0,655.0 1268.9,638.3 1273.4,634.0"/><polygon points="1320.0,655.0 1276.8,623.8 1285.7,620.0"/><polygon points="1320.0,655.0 1274.7,642.1 1282.5,635.1"/><polygon points="1320.0,655.0 1309.5,695.1 1291.9,691.9"/><polygon points="1320.0,655.0 1276.3,661.3 1275.4,658.0"/><polygon points="1320.0,655.0 1251.0,640.3 1256.0,633.7"/></g>
<text transform="matrix(0.869,-0.495,0.869,0.494,1308.8,670.0)" x="-17" y="10" font-family="Liberation Sans,sans-serif" font-size="28" fill="none" stroke="#c4b474" stroke-width="1.2">R1</text>
<polygon points="1512.0,686.7 1504.6,693.2 1504.6,714.2 1512.0,707.7" fill="#b0a683" />
<polygon points="1504.6,693.2 1494.0,694.6 1494.0,715.6 1504.6,714.2" fill="#a79e7d" />
<polygon points="1494.0,694.6 1487.6,695.0 1487.6,716.0 1494.0,715.6" fill="#a69d7d" />
<polygon points="1487.6,695.0 1486.8,689.7 1486.8,710.7 1487.6,716.0" fill="#958e72" />
<polygon points="1486.8,689.7 1463.8,677.0 1463.8,698.0 1486.8,710.7" fill="#9d9577" />
<polygon points="1467.3,673.3 1477.0,669.8 1494.7,669.4 1506.7,673.8 1512.0,682.1 1512.0,686.7 1504.6,693.2 1494.0,694.6 1487.6,695.0 1486.8,689.7 1463.8,677.0" fill="#e2d49c" />
<path d="M1474.2 680.9 V697.9 A18.5 11 0 0 0 1511.2 697.9 V680.9 Z" fill="url(#lg)"/><ellipse cx="1492.7" cy="680.9" rx="18.5" ry="11" fill="#e2d49c" stroke="#b3a97f" stroke-width=".5"/>
<ellipse cx="1491.2" cy="680.9" rx="3.4" ry="2.3" fill="#9c9474"/>
<polygon points="1487.6,695.0 1402.9,740.0 1402.9,757.5 1487.6,712.5" fill="#9c9577" />
<polygon points="1402.9,740.0 1400.3,748.8 1400.3,769.8 1402.9,761.0" fill="#a59d7d" />
<polygon points="1400.3,748.8 1398.5,755.9 1398.5,776.9 1400.3,769.8" fill="#a59d7d" />
<polygon points="1398.5,755.9 1367.6,771.8 1367.6,792.8 1398.5,776.9" fill="#9c9577" />
<polygon points="1367.6,771.8 1350.0,777.1 1350.0,798.1 1367.6,792.8" fill="#999276" />
<polygon points="1350.0,777.1 1346.5,774.4 1346.5,795.4 1350.0,798.1" fill="#89836c" />
<polygon points="1367.6,760.3 1342.9,745.3 1342.9,766.3 1367.6,781.3" fill="#8b846d" />
<polygon points="1342.9,745.3 1336.8,740.0 1336.8,761.0 1342.9,766.3" fill="#88826c" />
<polygon points="1336.8,740.0 1335.9,732.9 1335.9,753.9 1336.8,761.0" fill="#827c68" />
<polygon points="1487.6,701.0 1402.9,746.0 1402.9,752.5 1487.6,707.5" fill="#ded19c" />
<polygon points="1487.6,707.5 1402.9,752.5 1402.9,757.5 1487.6,712.5" fill="#dcc468" />
<polygon points="1482.3,704.8 1470.0,711.4 1470.0,717.9 1482.3,711.3" fill="#8d8770" />
<polygon points="1461.1,716.1 1452.3,720.8 1452.3,727.3 1461.1,722.6" fill="#8d8770" />
<polygon points="1335.9,732.9 1350.0,725.9 1355.3,711.8 1367.6,701.2 1385.3,692.4 1413.5,687.1 1429.4,679.1 1445.3,680.0 1459.4,674.7 1486.8,689.7 1487.6,695.0 1402.9,740.0 1400.3,748.8 1398.5,755.9 1367.6,771.8 1350.0,777.1 1346.5,774.4 1367.6,760.3 1342.9,745.3 1336.8,740.0" fill="url(#yr)" stroke="#a3913f" stroke-width="0.7" stroke-linejoin="round" />
<clipPath id="c7"><polygon points="1335.9,732.9 1350.0,725.9 1355.3,711.8 1367.6,701.2 1385.3,692.4 1413.5,687.1 1429.4,679.1 1445.3,680.0 1459.4,674.7 1486.8,689.7 1487.6,695.0 1402.9,740.0 1400.3,748.8 1398.5,755.9 1367.6,771.8 1350.0,777.1 1346.5,774.4 1367.6,760.3 1342.9,745.3 1336.8,740.0"/></clipPath><g clip-path="url(#c7)" fill="#fde381" fill-opacity="0.75"><polygon points="1405.0,705.0 1354.7,726.6 1350.2,722.3"/><polygon points="1405.0,705.0 1398.9,735.5 1388.1,734.0"/><polygon points="1405.0,705.0 1402.0,728.3 1394.0,727.4"/><polygon points="1405.0,705.0 1365.6,711.5 1364.6,708.6"/><polygon points="1405.0,705.0 1365.8,714.3 1363.1,707.5"/><polygon points="1405.0,705.0 1364.8,741.6 1351.6,734.9"/><polygon points="1405.0,705.0 1331.7,698.4 1335.0,690.3"/><polygon points="1405.0,705.0 1404.8,734.0 1391.2,732.8"/><polygon points="1405.0,705.0 1386.4,732.2 1380.7,730.6"/><polygon points="1405.0,705.0 1369.2,676.6 1376.2,673.9"/><polygon points="1405.0,705.0 1350.4,693.2 1354.9,687.5"/></g>
<text transform="matrix(0.869,-0.495,0.869,0.494,1394.1,720.6)" x="-17" y="10" font-family="Liberation Sans,sans-serif" font-size="28" fill="none" stroke="#c4b474" stroke-width="1.2">R1</text>
<polygon points="1581.8,743.2 1574.3,749.8 1574.3,770.8 1581.8,764.2" fill="#b0a683" />
<polygon points="1574.3,749.8 1563.8,751.2 1563.8,772.2 1574.3,770.8" fill="#a79e7d" />
<polygon points="1563.8,751.2 1557.4,752.1 1557.4,773.1 1563.8,772.2" fill="#a79e7d" />
<polygon points="1557.4,752.1 1557.0,746.8 1557.0,767.8 1557.4,773.1" fill="#958e72" />
<polygon points="1557.0,746.8 1533.2,733.5 1533.2,754.5 1557.0,767.8" fill="#9d9577" />
<polygon points="1537.6,730.0 1546.5,726.5 1564.1,726.1 1576.5,730.4 1581.8,738.8 1581.8,743.2 1574.3,749.8 1563.8,751.2 1557.4,752.1 1557.0,746.8 1533.2,733.5" fill="#e2d49c" />
<path d="M1543.0 737.9 V754.9 A18.5 11 0 0 0 1580.0 754.9 V737.9 Z" fill="url(#lg)"/><ellipse cx="1561.5" cy="737.9" rx="18.5" ry="11" fill="#e2d49c" stroke="#b3a97f" stroke-width=".5"/>
<ellipse cx="1560.0" cy="737.9" rx="3.4" ry="2.3" fill="#9c9474"/>
<polygon points="1557.4,752.1 1482.9,790.0 1482.9,807.5 1557.4,769.6" fill="#9c9577" />
<polygon points="1482.9,790.0 1481.2,802.3 1481.2,823.3 1482.9,811.0" fill="#a69e7d" />
<polygon points="1481.2,802.3 1454.7,814.7 1454.7,835.7 1481.2,823.3" fill="#9c9477" />
<polygon points="1454.7,814.7 1438.8,828.8 1438.8,849.8 1454.7,835.7" fill="#a09879" />
<polygon points="1438.8,828.8 1430.9,826.2 1430.9,847.2 1438.8,849.8" fill="#8e886f" />
<polygon points="1448.5,812.9 1422.9,796.2 1422.9,817.2 1448.5,833.9" fill="#8a846d" />
<polygon points="1422.9,791.8 1416.8,784.7 1416.8,805.7 1422.9,812.8" fill="#86806b" />
<polygon points="1557.4,758.1 1482.9,796.0 1482.9,802.5 1557.4,764.6" fill="#ded19c" />
<polygon points="1557.4,764.6 1482.9,802.5 1482.9,807.5 1557.4,769.6" fill="#dcc468" />
<polygon points="1552.1,761.8 1539.6,768.1 1539.6,774.6 1552.1,768.3" fill="#8d8770" />
<polygon points="1530.7,772.7 1521.8,777.2 1521.8,783.7 1530.7,779.2" fill="#8d8770" />
<polygon points="1416.8,784.7 1430.0,778.5 1433.5,763.5 1447.6,752.9 1463.5,746.8 1486.5,741.5 1500.6,734.4 1509.4,737.9 1528.8,731.8 1557.0,746.8 1557.4,752.1 1482.9,790.0 1481.2,802.3 1454.7,814.7 1438.8,828.8 1430.9,826.2 1448.5,812.9 1422.9,796.2 1422.9,791.8" fill="url(#yr)" stroke="#a3913f" stroke-width="0.7" stroke-linejoin="round" />
<clipPath id="c8"><polygon points="1416.8,784.7 1430.0,778.5 1433.5,763.5 1447.6,752.9 1463.5,746.8 1486.5,741.5 1500.6,734.4 1509.4,737.9 1528.8,731.8 1557.0,746.8 1557.4,752.1 1482.9,790.0 1481.2,802.3 1454.7,814.7 1438.8,828.8 1430.9,826.2 1448.5,812.9 1422.9,796.2 1422.9,791.8"/></clipPath><g clip-path="url(#c8)" fill="#fde381" fill-opacity="0.75"><polygon points="1490.0,745.0 1466.0,763.8 1457.7,758.6"/><polygon points="1490.0,745.0 1451.9,732.2 1454.8,729.5"/><polygon points="1490.0,745.0 1475.7,711.6 1484.1,710.7"/><polygon points="1490.0,745.0 1438.9,751.7 1437.7,745.4"/><polygon points="1490.0,745.0 1469.4,764.2 1461.3,760.1"/><polygon points="1490.0,745.0 1459.0,764.0 1455.7,761.9"/><polygon points="1490.0,745.0 1445.6,756.4 1442.0,748.2"/><polygon points="1490.0,745.0 1462.0,783.3 1452.3,780.2"/><polygon points="1490.0,745.0 1478.9,773.1 1468.3,770.8"/></g>
<text transform="matrix(0.869,-0.495,0.869,0.494,1472.3,772.3)" x="-17" y="10" font-family="Liberation Sans,sans-serif" font-size="28" fill="none" stroke="#c4b474" stroke-width="1.2">R2</text>
<g fill-opacity="0.85"><path d="M1100.2 639.5 V688.2 A10.2 5.8 0 0 0 1120.6 688.2 V639.5 Z" fill="url(#pg)"/><ellipse cx="1110.4" cy="688.2" rx="10.2" ry="5.8" fill="none" stroke="#3a3a3a" stroke-width=".6" stroke-opacity=".6"/><ellipse cx="1110.4" cy="639.5" rx="10.2" ry="5.8" fill="#b89a2c" stroke="#3a3a3a" stroke-width=".8"/></g>
<rect x="939.2" y="427" width="19.4" height="123.5" fill="url(#tg)"/>
<rect x="939.2" y="550" width="19.4" height="9" fill="#b8900a"/>
<path d="M939.2 559 V589 A9.7 5 0 0 0 958.6 589 V559 Z" fill="#c8b77c" fill-opacity=".85"/>
<ellipse cx="948.9" cy="427" rx="9.7" ry="5.3" fill="#ededed" stroke="#222" stroke-width=".9"/>
<polygon points="1443.8,863.6 856.6,525.9 856.6,575.5 1443.8,913.2" fill="rgb(40,40,40)" stroke="#2e2e2e" stroke-width="0.7" stroke-linejoin="round" fill-opacity="0.42"/>
<polygon points="856.6,525.9 863.7,522.6 863.7,572.2 856.6,575.5" fill="rgb(40,40,40)" stroke="#2e2e2e" stroke-width="0.7" stroke-linejoin="round" fill-opacity="0.16"/>
<polygon points="863.7,522.6 783.8,477.8 783.8,527.4 863.7,572.2" fill="rgb(40,40,40)" stroke="#2e2e2e" stroke-width="0.7" stroke-linejoin="round" fill-opacity="0.42"/>
<polygon points="783.8,477.8 776.5,480.7 776.5,530.3 783.8,527.4" fill="rgb(40,40,40)" stroke="#2e2e2e" stroke-width="0.7" stroke-linejoin="round" fill-opacity="0.16"/>
<polygon points="776.5,480.7 718.8,448.0 718.8,497.6 776.5,530.3" fill="rgb(40,40,40)" stroke="#2e2e2e" stroke-width="0.7" stroke-linejoin="round" fill-opacity="0.42"/>
<polygon points="1680.4,727.0 1653.8,742.3 1653.8,791.9 1680.4,776.6" fill="rgb(40,40,40)" stroke="#2e2e2e" stroke-width="0.7" stroke-linejoin="round" fill-opacity="0.42"/>
<polygon points="1653.8,742.3 1641.7,736.8 1641.7,786.4 1653.8,791.9" fill="rgb(40,40,40)" stroke="#2e2e2e" stroke-width="0.7" stroke-linejoin="round" fill-opacity="0.16"/>
<polygon points="1641.7,736.8 1590.9,766.6 1590.9,816.2 1641.7,786.4" fill="rgb(40,40,40)" stroke="#2e2e2e" stroke-width="0.7" stroke-linejoin="round" fill-opacity="0.42"/>
<polygon points="1590.9,766.6 1601.9,773.2 1601.9,822.8 1590.9,816.2" fill="rgb(40,40,40)" stroke="#2e2e2e" stroke-width="0.7" stroke-linejoin="round" fill-opacity="0.16"/>
<polygon points="1601.9,773.2 1520.8,819.5 1520.8,869.1 1601.9,822.8" fill="rgb(40,40,40)" stroke="#2e2e2e" stroke-width="0.7" stroke-linejoin="round" fill-opacity="0.42"/>
<polygon points="1520.8,819.5 1509.3,814.0 1509.3,863.6 1520.8,869.1" fill="rgb(40,40,40)" stroke="#2e2e2e" stroke-width="0.7" stroke-linejoin="round" fill-opacity="0.16"/>
<polygon points="1509.3,814.0 1457.4,841.6 1457.4,891.2 1509.3,863.6" fill="rgb(40,40,40)" stroke="#2e2e2e" stroke-width="0.7" stroke-linejoin="round" fill-opacity="0.42"/>
<polygon points="1457.4,841.6 1469.6,849.3 1469.6,898.9 1457.4,891.2" fill="rgb(40,40,40)" stroke="#2e2e2e" stroke-width="0.7" stroke-linejoin="round" fill-opacity="0.16"/>
<polygon points="1469.6,849.3 1443.8,863.6 1443.8,913.2 1469.6,898.9" fill="rgb(40,40,40)" stroke="#2e2e2e" stroke-width="0.7" stroke-linejoin="round" fill-opacity="0.42"/>
<clipPath id="ff"><polygon points="1443.8,863.6 856.6,525.9 856.6,575.5 1443.8,913.2"/><polygon points="856.6,525.9 863.7,522.6 863.7,572.2 856.6,575.5"/><polygon points="863.7,522.6 783.8,477.8 783.8,527.4 863.7,572.2"/><polygon points="783.8,477.8 776.5,480.7 776.5,530.3 783.8,527.4"/><polygon points="776.5,480.7 718.8,448.0 718.8,497.6 776.5,530.3"/><polygon points="1680.4,727.0 1653.8,742.3 1653.8,791.9 1680.4,776.6"/><polygon points="1653.8,742.3 1641.7,736.8 1641.7,786.4 1653.8,791.9"/><polygon points="1641.7,736.8 1590.9,766.6 1590.9,816.2 1641.7,786.4"/><polygon points="1590.9,766.6 1601.9,773.2 1601.9,822.8 1590.9,816.2"/><polygon points="1601.9,773.2 1520.8,819.5 1520.8,869.1 1601.9,822.8"/><polygon points="1520.8,819.5 1509.3,814.0 1509.3,863.6 1520.8,869.1"/><polygon points="1509.3,814.0 1457.4,841.6 1457.4,891.2 1509.3,863.6"/><polygon points="1457.4,841.6 1469.6,849.3 1469.6,898.9 1457.4,891.2"/><polygon points="1469.6,849.3 1443.8,863.6 1443.8,913.2 1469.6,898.9"/></clipPath>
<g clip-path="url(#ff)" fill="#a07800" fill-opacity=".5"><polygon points="768.8,471.5 771.5,464.4 782.1,457.9 812.9,468.8 853.5,484.7 853.5,504.1 839.4,512.1 828.8,516.5 812.9,516.8 777.6,497.4 769.7,490.9 768.5,480.3"/><polygon points="857.0,512.6 858.9,508.7 863.1,506.3 869.7,504.1 938.6,538.5 938.6,551.8 929.3,557.5 914.9,562.2 907.2,564.1 898.4,561.9 863.1,542.1 857.0,536.9"/><polygon points="953.8,576.2 956.5,571.8 963.5,567.9 1027.9,578.8 1027.9,600.3 1012.9,607.4 998.8,612.7 988.2,611.8 954.7,593.3"/><polygon points="1037.6,609.4 1041.2,603.2 1051.8,598.5 1120.6,625.3 1120.6,642.9 1102.9,651.8 1090.6,655.6 1078.2,653.5 1037.6,630.6"/><polygon points="1143.6,668.9 1147.0,661.8 1156.9,656.1 1339.6,608.0 1339.6,622.2 1311.3,636.3 1288.6,647.6 1266.0,659.0 1249.0,666.1 1241.9,673.1 1240.5,698.6 1223.5,710.0 1209.3,716.2 1195.2,715.1 1143.6,687.3"/><polygon points="1218.4,721.3 1222.1,714.2 1232.0,708.6 1426.0,656.1 1426.0,673.1 1399.1,685.9 1373.6,698.6 1351.0,710.0 1334.0,717.1 1328.3,724.1 1328.3,749.6 1311.3,761.0 1288.6,769.5 1277.3,770.9 1266.0,766.6 1218.4,741.1"/><polygon points="1305.6,769.0 1309.8,763.3 1318.3,759.1 1512.4,702.4 1512.4,722.2 1488.3,735.0 1460.0,746.3 1437.3,759.1 1417.5,769.0 1411.8,791.6 1403.3,797.3 1375.0,812.9 1360.8,820.0 1346.7,817.1 1305.6,794.5"/><polygon points="1387.7,820.0 1392.0,812.9 1400.5,808.6 1583.2,760.5 1583.2,778.9 1562.0,790.2 1539.3,801.6 1516.6,813.7 1496.8,817.7 1492.5,821.4 1492.5,840.4 1485.5,846.9 1448.6,865.3 1431.6,870.4 1417.5,866.7 1387.7,848.3"/></g>
<circle cx="948.8" cy="589.6" r="4.4" fill="#ececec" stroke="#555" stroke-width=".6"/>
<polygon points="955.0,312.4 1280.5,498.8 1268.4,505.9 1343.4,548.2 1355.1,541.8 1680.4,727.0 1653.8,742.3 1641.7,736.8 1590.9,766.6 1601.9,773.2 1520.8,819.5 1509.3,814.0 1457.4,841.6 1469.6,849.3 1443.8,863.6 856.6,525.9 863.7,522.6 783.8,477.8 776.5,480.7 718.8,448.0 744.8,433.3 756.3,439.3 807.7,410.2 796.4,403.5 877.8,356.8 889.3,363.4 941.1,334.5 929.4,327.4" fill="none" stroke="#2e2e2e" stroke-width=".8"/>
<path d="M818 339 L1030.5 326.3" stroke="#f01414" stroke-width="2.6" stroke-dasharray="4.8 4.2" fill="none"/>
<path d="M958.2 368.2 L1117.7 376.4" stroke="#f01414" stroke-width="2.6" stroke-dasharray="4.8 4.2" fill="none"/>
<path d="M1044.9 418.3 L1199.3 426.7" stroke="#f01414" stroke-width="2.6" stroke-dasharray="4.8 4.2" fill="none"/>
<path d="M1086.5 480 L1161.5 549.7" stroke="#f01414" stroke-width="2.6" stroke-dasharray="4.8 4.2" fill="none"/>
<path d="M1144.6 571.4 L1240.7 605.5" stroke="#f01414" stroke-width="2.6" stroke-dasharray="4.8 4.2" fill="none"/>
<path d="M1256.8 650.6 L1327.9 655.5" stroke="#f01414" stroke-width="2.6" stroke-dasharray="4.8 4.2" fill="none"/>
<path d="M1344.3 700 L1409.5 705.4" stroke="#f01414" stroke-width="2.6" stroke-dasharray="4.8 4.2" fill="none"/>
<path d="M818 339 V424.5" stroke="#0a14f0" stroke-width="2.8" stroke-dasharray="2.7 2.7" fill="none"/>
<path d="M930.5 287.7 V383.7" stroke="#0a14f0" stroke-width="2.8" stroke-dasharray="2.7 2.7" fill="none"/>
<path d="M1030.5 326.3 V421" stroke="#0a14f0" stroke-width="2.8" stroke-dasharray="2.7 2.7" fill="none"/>
<path d="M958.2 368.2 V452" stroke="#0a14f0" stroke-width="2.8" stroke-dasharray="2.7 2.7" fill="none"/>
<path d="M1117.7 376.4 V469.7" stroke="#0a14f0" stroke-width="2.8" stroke-dasharray="2.7 2.7" fill="none"/>
<path d="M1044.9 418.3 V506.8" stroke="#0a14f0" stroke-width="2.8" stroke-dasharray="2.7 2.7" fill="none"/>
<path d="M1199.3 426.7 V545" stroke="#0a14f0" stroke-width="2.8" stroke-dasharray="2.7 2.7" fill="none"/>
<path d="M1086.5 480 V563" stroke="#0a14f0" stroke-width="2.8" stroke-dasharray="2.7 2.7" fill="none"/>
<path d="M1161.4 549.7 V648" stroke="#0a14f0" stroke-width="2.8" stroke-dasharray="2.7 2.7" fill="none"/>
<path d="M1144.6 571.4 V669" stroke="#0a14f0" stroke-width="2.8" stroke-dasharray="2.7 2.7" fill="none"/>
<path d="M1240.7 605.5 V705.5" stroke="#0a14f0" stroke-width="2.8" stroke-dasharray="2.7 2.7" fill="none"/>
<path d="M1256.8 650.6 V747.6" stroke="#0a14f0" stroke-width="2.8" stroke-dasharray="2.7 2.7" fill="none"/>
<path d="M1327.9 655.5 V756.5" stroke="#0a14f0" stroke-width="2.8" stroke-dasharray="2.7 2.7" fill="none"/>
<path d="M1344.4 700 V798.2" stroke="#0a14f0" stroke-width="2.8" stroke-dasharray="2.7 2.7" fill="none"/>
<path d="M1409.5 705.4 V803.5" stroke="#0a14f0" stroke-width="2.8" stroke-dasharray="2.7 2.7" fill="none"/>
<path d="M1464 742 V839.4" stroke="#0a14f0" stroke-width="2.8" stroke-dasharray="2.7 2.7" fill="none"/>
<g stroke="#b9b9b9" stroke-width="1" fill="none"><path d="M684.6 781.7 L655.5 797.6 L685.3 814.9 L715 797.9 Z M655.5 797.6 V832.6 L685.3 849.6 L715 832.6 V797.9 M685.3 814.9 V849.6"/></g><path d="M684.9 799 V771" stroke="#0c2fc0" stroke-width="5.2" stroke-linecap="round"/><path d="M684.9 755.8 L690.4 773 H679.4 Z" fill="#0c2fc0"/><path d="M655.5 798 L642 791" stroke="#cf4343" stroke-width="4.4"/><path d="M633 786.3 L646.5 787.5 L642.3 795.6 Z" fill="#d24545"/><path d="M670.5 824 L648 836.6" stroke="#2f9d40" stroke-width="4.4" stroke-linecap="round"/><path d="M633 845 L645.6 832.5 L650.6 841.5 Z" fill="#2f9d40"/><text x="680.5" y="752" font-family="Liberation Sans,sans-serif" font-size="11.5" fill="#2563ff">Z</text><text x="622.5" y="786.5" font-family="Liberation Sans,sans-serif" font-size="11.5" fill="#c84848">X</text><text x="622.5" y="853" font-family="Liberation Sans,sans-serif" font-size="11.5" fill="#2f8f3a">Y</text>
</svg>
<div class="a" style="left:577px;top:86px;width:2px;height:821px;background:#a6a6a6"></div>
<div class="a" style="left:578px;top:85px;width:199px;height:26px;background:#005b84"></div>
<div class="a" style="left:578px;top:109px;width:1089px;height:2px;background:#005b84"></div>
<svg class="a" style="left:583px;top:90px" width="18" height="16"><path d="M5 1.5 H1.5 V6 H5 V10.5 H1.5" fill="none" stroke="#fff" stroke-width="1.1"/><path d="M8 8 A4 4 0 0 1 15 6 M15 9.5 A4 4 0 0 1 8 11.5 M15 3 V6 H12 M8 14.5 V11.5 H11" fill="none" stroke="#fff" stroke-width="1.1"/></svg>
<span class="a" style="left:604px;top:90px;color:#fff;font-size:12px;line-height:15px">L&amp;R四合一_2_2506.prt</span>
<svg class="a" style="left:745px;top:92px" width="12" height="12"><path d="M6 1.5 H1.5 V10.5 H9 V7" fill="none" stroke="#fff" stroke-width="1.6"/><path d="M5 7 L10.5 1.5 M7 1 H11 V5" fill="none" stroke="#fff" stroke-width="1.5"/></svg>
<svg class="a" style="left:761px;top:92px" width="11" height="11"><path d="M1.5 1.5 L9 9 M9 1.5 L1.5 9" stroke="#fff" stroke-width="2.2"/></svg>
<div class="info"><div class="l m" style="top:111px">燕秀软件<i>:</i></div><div class="v m c" style="top:111px">免费使用</div><div class="l m" style="top:132px;left:7px">「设置」</div><div class="l g" style="top:153px">程序组<i>:</i></div><div class="v m" style="top:155px">OP1</div><div class="l g" style="top:174px">刀路名称<i>:</i></div><div class="v m" style="top:176px">PLANAR_MILL_5</div><div class="l g" style="top:195px">刀路坐标<i>:</i></div><div class="v m" style="top:197px">MCS_1</div><div class="l r" style="top:216px">刀具名称<i>:</i></div><div class="v r" style="top:218px">D6-16L-AL</div><div class="l r" style="top:237px">真实刀名<i>:</i></div><div class="v r" style="top:239px">D6</div><div class="l r" style="top:258px">刀具编号<i>:</i></div><div class="v r" style="top:260px">T2</div><div class="l r" style="top:279px">刀具直径<i>:</i></div><div class="v r" style="top:281px">6</div><div class="l g" style="top:300px">刀具圆角<i>:</i></div><div class="v m" style="top:302px">0</div><div class="l g" style="top:321px">刀具类型<i>:</i></div><div class="v m c" style="top:321px">平底刀</div><div class="l r" style="top:342px">最短刀长<i>:</i></div><div class="l g" style="top:363px">刀头名称<i>:</i></div><div class="l r" style="top:384px">刀尖深度<i>:</i></div><div class="l r" style="top:405px">刀尖类型<i>:</i></div><div class="l r" style="top:426px">刀尖步距<i>:</i></div><div class="l g" style="top:447px">内公差<i>:</i></div><div class="v m" style="top:449px">0.03</div><div class="l g" style="top:468px">外公差<i>:</i></div><div class="v m" style="top:470px">0.03</div><div class="l g" style="top:489px">侧面余量<i>:</i></div><div class="v m" style="top:491px">0.2</div><div class="l g" style="top:510px">底面余量<i>:</i></div><div class="v m" style="top:512px">0.15</div><div class="l g" style="top:531px">转速<i>:</i></div><div class="v m" style="top:533px">10000</div><div class="l g" style="top:552px">进给<i>:</i></div><div class="v m" style="top:554px">2500</div><div class="l g" style="top:573px">行距<i>:</i></div><div class="v m" style="top:575px">40%</div><div class="l r" style="top:594px">下刀量<i>:</i></div><div class="v r" style="top:596px">0</div><div class="l g" style="top:615px">加工时间<i>:</i></div><div class="v m" style="top:617px">00:05:29</div></div>
<span style="position:absolute;white-space:nowrap;top:886px;line-height:18px;height:18px;color:#5a5a5a;font-family:'Liberation Serif',serif;text-shadow:0 0 1px #fff,0 0 1px #fff;left:1453px;font-size:14.5px;transform-origin:0 50%;transform:scaleX(.76)">UG</span>
<span style="position:absolute;white-space:nowrap;top:886px;line-height:18px;height:18px;color:#5a5a5a;font-family:'Liberation Serif',serif;text-shadow:0 0 1px #fff,0 0 1px #fff;left:1470px;font-size:15.4px;font-style:italic">爱好者论坛</span>
<span style="position:absolute;white-space:nowrap;top:886px;line-height:18px;height:18px;color:#5a5a5a;font-family:'Liberation Serif',serif;text-shadow:0 0 1px #fff,0 0 1px #fff;left:1558px;font-size:14.5px;transform-origin:0 50%;transform:scaleX(.78)">WWW.UGSNX.COM</span>
</body></html>
